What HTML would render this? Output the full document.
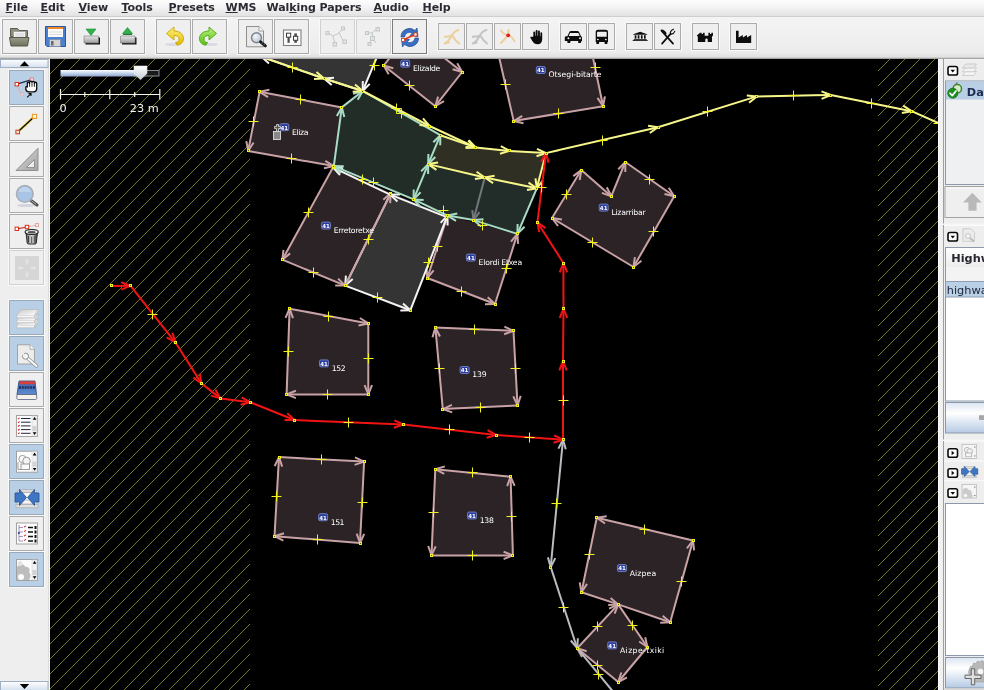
<!DOCTYPE html>
<html><head><meta charset="utf-8"><title>JOSM</title>
<style>
html,body{margin:0;padding:0}
body{-webkit-font-smoothing:antialiased;width:984px;height:690px;overflow:hidden;position:relative;background:#eeeeee;font-family:"DejaVu Sans","Liberation Sans",sans-serif;}
.abs{position:absolute}
svg,#menubar{will-change:transform}
#menubar{left:0;top:0;width:984px;height:16px;background:linear-gradient(#fdfdfd,#f2f2f2 50%,#e2e2e2);border-bottom:1px solid #cfcfcf}
#menubar span{position:absolute;top:-0.5px;letter-spacing:-0.08px;margin-left:0.6px;font-size:11px;font-weight:bold;color:#2e2a33;white-space:nowrap;line-height:15px}
#menubar u{text-decoration:underline;text-underline-offset:1px}
#toolbar{left:0;top:17px;width:984px;height:40px;background:linear-gradient(#f4f4f4,#ececec 88%,#e0e0e0);border-bottom:1px solid #cfcfcf;box-shadow:0 1px 0 #a4a4a4}
.tb{position:absolute;box-sizing:border-box;border:1px solid #b4b4b4;box-shadow:0 0 0 1px #fbfbfb;background:#efefef}
.tb.sel{background:#b8cfe5;border-color:#9fb4c9}
.tb svg{position:absolute;left:0;top:0}
#left{left:0;top:59px;width:48px;height:631px;background:#eeeeee;border-right:2px solid #f8f8f8}
#map{left:50px;top:59px;width:888px;height:631px;background:#000;overflow:hidden}
#right{left:938px;top:59px;width:46px;height:631px;background:#eeeeee}
</style></head><body>
<div id="menubar" class="abs">
<span style="left:5px"><u>F</u>ile</span>
<span style="left:40px"><u>E</u>dit</span>
<span style="left:78px"><u>V</u>iew</span>
<span style="left:121px"><u>T</u>ools</span>
<span style="left:168px"><u>P</u>resets</span>
<span style="left:225px"><u>W</u>MS</span>
<span style="left:266px">Wal<u>k</u>ing Papers</span>
<span style="left:373px"><u>A</u>udio</span>
<span style="left:422px"><u>H</u>elp</span>
</div>
<div id="toolbar" class="abs">
<svg width="984" height="42" viewBox="0 17 984 42" style="position:absolute;left:0;top:0" font-family="DejaVu Sans, Liberation Sans, sans-serif">
<defs><linearGradient id="gfold" x1="0" y1="0" x2="0" y2="1"><stop offset="0" stop-color="#9a9c88"/><stop offset="1" stop-color="#6e705e"/></linearGradient><linearGradient id="gbox" x1="0" y1="0" x2="0" y2="1"><stop offset="0" stop-color="#e8e8e8"/><stop offset="1" stop-color="#9c9c9c"/></linearGradient><linearGradient id="gund" x1="0" y1="0" x2="0" y2="1"><stop offset="0" stop-color="#fff27a"/><stop offset="1" stop-color="#e2b800"/></linearGradient><linearGradient id="gred" x1="0" y1="0" x2="0" y2="1"><stop offset="0" stop-color="#b6f27a"/><stop offset="1" stop-color="#5cc016"/></linearGradient><radialGradient id="glens" cx=".4" cy=".35" r=".7"><stop offset="0" stop-color="#f4f8fc"/><stop offset="1" stop-color="#b4c2d0"/></radialGradient></defs>
<rect x="1.5" y="18.5" width="36" height="36" fill="none" stroke="#fafafa" stroke-width="1"/><rect x="2.5" y="19.5" width="34" height="34" fill="#efefef" stroke="#ababab" stroke-width="1"/>
<rect x="37.5" y="18.5" width="36" height="36" fill="none" stroke="#fafafa" stroke-width="1"/><rect x="38.5" y="19.5" width="34" height="34" fill="#efefef" stroke="#ababab" stroke-width="1"/>
<rect x="73.5" y="18.5" width="36" height="36" fill="none" stroke="#fafafa" stroke-width="1"/><rect x="74.5" y="19.5" width="34" height="34" fill="#efefef" stroke="#ababab" stroke-width="1"/>
<rect x="109.5" y="18.5" width="36" height="36" fill="none" stroke="#fafafa" stroke-width="1"/><rect x="110.5" y="19.5" width="34" height="34" fill="#efefef" stroke="#ababab" stroke-width="1"/>
<rect x="155.5" y="18.5" width="36" height="36" fill="none" stroke="#fafafa" stroke-width="1"/><rect x="156.5" y="19.5" width="34" height="34" fill="#efefef" stroke="#ababab" stroke-width="1"/>
<rect x="191.5" y="18.5" width="36" height="36" fill="none" stroke="#fafafa" stroke-width="1"/><rect x="192.5" y="19.5" width="34" height="34" fill="#efefef" stroke="#ababab" stroke-width="1"/>
<rect x="237.5" y="18.5" width="36" height="36" fill="none" stroke="#fafafa" stroke-width="1"/><rect x="238.5" y="19.5" width="34" height="34" fill="#efefef" stroke="#ababab" stroke-width="1"/>
<rect x="273.5" y="18.5" width="36" height="36" fill="none" stroke="#fafafa" stroke-width="1"/><rect x="274.5" y="19.5" width="34" height="34" fill="#efefef" stroke="#ababab" stroke-width="1"/>
<rect x="319.5" y="18.5" width="36" height="36" fill="none" stroke="#fafafa" stroke-width="1"/><rect x="320.5" y="19.5" width="34" height="34" fill="#efefef" stroke="#d0d0d0" stroke-width="1"/>
<rect x="355.5" y="18.5" width="36" height="36" fill="none" stroke="#fafafa" stroke-width="1"/><rect x="356.5" y="19.5" width="34" height="34" fill="#efefef" stroke="#d0d0d0" stroke-width="1"/>
<rect x="391.5" y="18.5" width="36" height="36" fill="none" stroke="#fafafa" stroke-width="1"/><rect x="392.5" y="19.5" width="34" height="34" fill="#efefef" stroke="#ababab" stroke-width="1"/>
<rect x="392.5" y="19.5" width="34" height="34" fill="none" stroke="#7c7c7c"/>
<rect x="437.5" y="22.5" width="28" height="28" fill="none" stroke="#fafafa" stroke-width="1"/><rect x="438.5" y="23.5" width="26" height="26" fill="#efefef" stroke="#ababab" stroke-width="1"/>
<rect x="465.5" y="22.5" width="28" height="28" fill="none" stroke="#fafafa" stroke-width="1"/><rect x="466.5" y="23.5" width="26" height="26" fill="#efefef" stroke="#ababab" stroke-width="1"/>
<rect x="493.5" y="22.5" width="28" height="28" fill="none" stroke="#fafafa" stroke-width="1"/><rect x="494.5" y="23.5" width="26" height="26" fill="#efefef" stroke="#ababab" stroke-width="1"/>
<rect x="521.5" y="22.5" width="28" height="28" fill="none" stroke="#fafafa" stroke-width="1"/><rect x="522.5" y="23.5" width="26" height="26" fill="#efefef" stroke="#ababab" stroke-width="1"/>
<rect x="559.5" y="22.5" width="28" height="28" fill="none" stroke="#fafafa" stroke-width="1"/><rect x="560.5" y="23.5" width="26" height="26" fill="#efefef" stroke="#ababab" stroke-width="1"/>
<rect x="587.5" y="22.5" width="28" height="28" fill="none" stroke="#fafafa" stroke-width="1"/><rect x="588.5" y="23.5" width="26" height="26" fill="#efefef" stroke="#ababab" stroke-width="1"/>
<rect x="625.5" y="22.5" width="28" height="28" fill="none" stroke="#fafafa" stroke-width="1"/><rect x="626.5" y="23.5" width="26" height="26" fill="#efefef" stroke="#ababab" stroke-width="1"/>
<rect x="653.5" y="22.5" width="28" height="28" fill="none" stroke="#fafafa" stroke-width="1"/><rect x="654.5" y="23.5" width="26" height="26" fill="#efefef" stroke="#ababab" stroke-width="1"/>
<rect x="691.5" y="22.5" width="28" height="28" fill="none" stroke="#fafafa" stroke-width="1"/><rect x="692.5" y="23.5" width="26" height="26" fill="#efefef" stroke="#ababab" stroke-width="1"/>
<rect x="729.5" y="22.5" width="28" height="28" fill="none" stroke="#fafafa" stroke-width="1"/><rect x="730.5" y="23.5" width="26" height="26" fill="#efefef" stroke="#ababab" stroke-width="1"/>
<g><path d="M10.5 28.5h7l1.5 2h8.5v6h-17z" fill="#8d8f7b" stroke="#5b5d4e"/><path d="M13.5 31.5h12v8h-12z" fill="#f4f4f4" stroke="#9a9a9a" stroke-width=".8"/><path d="M15 34h9M15 36h9" stroke="#c8c8c8" stroke-width=".8"/><path d="M9.5 37.5h19.5l-1.5 8.500h-16.500z" fill="url(#gfold)" stroke="#55574a"/></g>
<g><path d="M45.500 26.500h20v20h-18.500l-1.500-1.500z" fill="#4b7fd0" stroke="#2b559c"/><rect x="48" y="27" width="15" height="2" fill="#f08a2a"/><rect x="48" y="29" width="15" height="8" fill="#fbfbfb"/><path d="M49 32h13M49 34.500h13" stroke="#cfcfcf" stroke-width=".7"/><rect x="49.500" y="39.500" width="11" height="7" fill="#d4d4d4" stroke="#7f8ea8" stroke-width=".8"/><rect x="51" y="41" width="2.500" height="4.500" fill="#6a6a6a"/></g>
<g><path d="M86 29h10l-5 6.500z" fill="#2fb24a" stroke="#1d8a35" stroke-width=".6"/><path d="M85.500 37.500h14.500v7h-14.500z" fill="#111"/><path d="M84 36h14.500v7h-14.500z" fill="url(#gbox)" stroke="#777" stroke-width=".6"/></g>
<g><path d="M122.500 33.500h10l-5-6z" fill="#2fb24a" stroke="#1d8a35" stroke-width=".6"/><rect x="123" y="33.800" width="9" height="1.200" fill="#1d7a30"/><path d="M122 37.500h14.500v7h-14.500z" fill="#111"/><path d="M120.500 36h14.500v7h-14.500z" fill="url(#gbox)" stroke="#777" stroke-width=".6"/></g>
<g><ellipse cx="173" cy="44.500" rx="8" ry="1.600" fill="#d0d0e4" opacity=".7"/><path d="M166.500 33.500l7.500-6.500v4c5.500 0 9.500 3 9.500 7.500 0 4-3 6.500-6.500 6.500l-1.500-2.500c2.500 0 3.500-1.500 3.500-3.500 0-2.500-2-3.500-5-3.500v4.500z" fill="url(#gund)" stroke="#c9a400" stroke-width=".9" stroke-linejoin="round"/></g>
<g><ellipse cx="210" cy="44.500" rx="8" ry="1.600" fill="#d0d0e4" opacity=".7"/><path d="M216.500 33.500l-7.500-6.500v4c-5.500 0-9.500 3-9.500 7.500 0 4 3 6.500 6.500 6.500l1.500-2.500c-2.500 0-3.500-1.500-3.500-3.500 0-2.500 2-3.500 5-3.500v4.500z" fill="url(#gred)" stroke="#4ea512" stroke-width=".9" stroke-linejoin="round"/></g>
<g><path d="M246.500 26.500h12.500l4.500 4.500v15.800h-17z" fill="#e9e9e9" stroke="#8e8e8e"/><path d="M259 26.500v4.500h4.500" fill="#fafafa" stroke="#8e8e8e" stroke-width=".8"/><circle cx="256.500" cy="37.700" r="5" fill="url(#glens)" stroke="#80848c" stroke-width="1.400"/><path d="M260.600 41.800l4.800 4" stroke="#1c1c1c" stroke-width="3" stroke-linecap="round"/><path d="M261.800 43.600l1.600-1.800M263.600 45.200l1.600-1.800" stroke="#9a9a9a" stroke-width=".6"/></g>
<g><rect x="283.500" y="30" width="17.500" height="15.500" fill="#fbfbfb" stroke="#808080" stroke-width="1.100"/><rect x="287.500" y="37" width="2.200" height="5.800" fill="#4c4c4c"/><rect x="294.300" y="33.400" width="2.600" height="9.400" fill="#4c4c4c"/><rect x="286.500" y="33.200" width="4.200" height="4" fill="#fbfbfb" stroke="#3c3c3c" stroke-width="1"/><rect x="293.500" y="36.300" width="4.200" height="4" fill="#fbfbfb" stroke="#3c3c3c" stroke-width="1"/></g>
<g fill="none" stroke="#c4c8c8" stroke-width="1"><path d="M328 33l5 3 6-3 4-5M333 36l2 8M339 33l5 9"/><rect x="326" y="31.500" width="3" height="3" fill="#dfe3e3"/><rect x="333" y="42.500" width="3.500" height="3.500" fill="#dfe3e3"/><rect x="343" y="40" width="3.500" height="3.500" fill="#dfe3e3"/><rect x="341.500" y="27" width="3" height="3" fill="#dfe3e3"/></g>
<g fill="none" stroke="#c4c8c8" stroke-width="1"><path d="M367 33h5l5-4M372 33l1 5 3 5M373 38l-4 6"/><rect x="365.500" y="31.500" width="3" height="3" fill="#dfe3e3"/><rect x="370.500" y="36.500" width="4" height="4" fill="#dfe3e3"/><rect x="376" y="27.500" width="3.500" height="3.500" fill="#dfe3e3"/><rect x="368" y="42.500" width="3" height="3" fill="#dfe3e3"/></g>
<g><path d="M401 37a8.500 8.500 0 0 1 14-6.500l2-2.500 1 8.500-8-1 2.300-2.300a5 5 0 0 0-7.800 3.800z" fill="#3a6fc2" stroke="#1f4a94" stroke-width=".7"/><path d="M418.500 38a8.500 8.500 0 0 1-14 6.500l-2 2.500-1-8.500 8 1-2.300 2.300a5 5 0 0 0 7.800-3.800z" fill="#3a6fc2" stroke="#1f4a94" stroke-width=".7"/><path d="M403 40l6.500-3 6-2.500" stroke="#e23a1c" stroke-width="1.600" fill="none"/><rect x="401.500" y="38.500" width="3" height="3" fill="#fff" stroke="#e23a1c" stroke-width=".8"/><rect x="414" y="33" width="3" height="3" fill="#fff" stroke="#e23a1c" stroke-width=".8"/></g>
<g transform="translate(438,23)" fill="none" stroke="#ecd09c" stroke-width="2" stroke-linecap="round"><path d="M20.400 7c-3.400 1-5.900 4-7.100 6.500c-1.800 3.500-3.800 5.500-5.900 6.700"/><path d="M14.300 12.500c1.700 3 4.200 6 6.700 8.100"/><path d="M6.800 13.800l6.200-.6"/><path d="M6.600 20.400l4.200-.8"/></g>
<g transform="translate(466,23)" fill="none" stroke="#c4c4c4" stroke-width="2" stroke-linecap="round"><path d="M20.400 7c-3.400 1-5.900 4-7.100 6.500c-1.800 3.500-3.800 5.500-5.900 6.700"/><path d="M14.300 12.500c1.700 3 4.200 6 6.700 8.100"/><path d="M6.800 13.800l6.200-.6"/><path d="M6.600 20.400l4.200-.8"/></g>
<g transform="translate(494,23)" fill="none" stroke="#ecd09c" stroke-width="2" stroke-linecap="round"><path d="M7 7.400c1.500 2.600 4 4 7.200 4.900s5.200 3.400 6.200 5.900"/><path d="M14.500 7c.4 2.400 0 4-1 5.800s-4 4.700-6.600 7.200"/><circle cx="14.200" cy="12.300" r="1.900" fill="#e8191c" stroke="none"/></g>
<g transform="translate(525.74,27.01) scale(0.844,0.768)" fill="#0d0d0d"><path d="M9 12.500v-5.500a1.100 1.100 0 0 1 2.200 0v4.500h.6v-6.500a1.100 1.100 0 0 1 2.200 0v6.500h.6v-5.800a1.100 1.100 0 0 1 2.200 0v6.200h.6v-3.900a1.050 1.050 0 0 1 2.100 0v8c0 4-2 6.500-5.500 6.500-3 0-4.500-1.500-6-4l-2.500-4.500c-.6-1.200.9-2 1.700-1z"/></g>
<g transform="translate(563.34,24.79) scale(0.804,0.796)" fill="#0d0d0d"><path d="M5 14.500l2.500-5.500c.4-.8 1-1.200 2-1.200h8c1 0 1.600.4 2 1.200l2.500 5.500c.8.300 1.200.9 1.200 1.800v4.200h-21.400v-4.200c0-.9.400-1.500 1.200-1.800z"/><path d="M8.300 10.200h10.400l1.600 3.800h-13.600z" fill="#efefef"/><rect x="5" y="20" width="3.600" height="3" rx=".6"/><rect x="18.400" y="20" width="3.600" height="3" rx=".6"/><circle cx="6.300" cy="17" r="1.200" fill="#efefef"/><circle cx="20.700" cy="17" r="1.200" fill="#efefef"/></g>
<g transform="translate(589.08,24.88) scale(0.946,0.821)" fill="#0d0d0d"><path d="M7 8.500c0-1.500 1-2.500 2.500-2.500h8c1.500 0 2.500 1 2.500 2.500v12.500h-13z"/><rect x="8.400" y="8.500" width="10.200" height="6" rx=".8" fill="#efefef"/><rect x="7.600" y="20.500" width="3" height="2.800" rx=".5"/><rect x="16.400" y="20.500" width="3" height="2.800" rx=".5"/><circle cx="9.300" cy="17.800" r="1" fill="#efefef"/><circle cx="17.700" cy="17.800" r="1" fill="#efefef"/></g>
<g transform="translate(626.70,27.72) scale(1.000,0.612)" fill="#0d0d0d"><path d="M6.500 10.500l7-4 7 4v1h-14z"/><rect x="7" y="18.500" width="13" height="1.300"/><rect x="6" y="20.300" width="15" height="1.400"/><rect x="8" y="12.300" width="1.700" height="5.600"/><rect x="11" y="12.300" width="1.700" height="5.600"/><rect x="14.200" y="12.300" width="1.700" height="5.600"/><rect x="17.300" y="12.300" width="1.700" height="5.600"/></g>
<g transform="translate(656.13,25.06) scale(0.847,0.842)" stroke="#0d0d0d" stroke-width="2" stroke-linecap="round" fill="none"><path d="M7 7.500l13 14.500"/><path d="M7 22l10-11.500"/><path d="M17 10.500c-.5-2 1-4.500 3.500-5.500M17 10.500c2 .5 4-.5 5-3" stroke-width="1.400"/><path d="M6.500 6.500c1.500 0 3.500 1.500 4.500 3.500" stroke-width="2.600"/></g>
<g transform="translate(695.64,26.42) scale(0.805,0.785)" fill="#0d0d0d"><path d="M5.500 8h2v1.500h1.700v-1.500h2v4h4.600v-4h2v1.500h1.700v-1.500h2v3.500l-1.200 1.500v7h-17.600v-7l-1.200-1.500z"/><path d="M12 20v-3a1.500 1.500 0 0 1 3 0v3z" fill="#efefef"/></g>
<g transform="translate(730.23,24.81) scale(1.048,0.841)" fill="#0d0d0d"><path d="M5.500 21.500v-14.500h2.500v8l4-3v3l4-3v3l4-3v9.500z"/></g>
</svg>
</div>
<div id="left" class="abs">
<svg width="50" height="631" viewBox="0 59 50 631" style="position:absolute;left:0;top:0" font-family="DejaVu Sans, Liberation Sans, sans-serif">
<defs><linearGradient id="gsb" x1="0" y1="0" x2="0" y2="1"><stop offset="0" stop-color="#ffffff"/><stop offset="1" stop-color="#d3e0ee"/></linearGradient><linearGradient id="glay" x1="0" y1="0" x2="1" y2="1"><stop offset="0" stop-color="#c9c9c9"/><stop offset="1" stop-color="#ffffff"/></linearGradient><linearGradient id="gtri" x1="0" y1="0" x2="1" y2="1"><stop offset="0" stop-color="#d8d8d8"/><stop offset="1" stop-color="#a4a4a4"/></linearGradient><linearGradient id="gbook" x1="0" y1="0" x2="0" y2="1"><stop offset="0" stop-color="#3a62ae"/><stop offset="1" stop-color="#5f8ad0"/></linearGradient><linearGradient id="gcan" x1="0" y1="0" x2="1" y2="0"><stop offset="0" stop-color="#5a5a5a"/><stop offset=".5" stop-color="#e0e0e0"/><stop offset="1" stop-color="#3a3a3a"/></linearGradient></defs>
<rect x="48" y="58" width="2" height="632" fill="#f7f7f7"/><rect x="48" y="58" width="1" height="632" fill="#dcdcdc"/>
<rect x="0.5" y="59.500" width="47.500" height="8" fill="url(#gsb)" stroke="#9fb0c4" stroke-width="1"/><path d="M19.800 66.200h9.400l-4.700-5z" fill="#000"/>
<rect x="0.5" y="681.500" width="47.500" height="9" fill="url(#gsb)" stroke="#9fb0c4" stroke-width="1"/><path d="M19.800 684h9.400l-4.700 5z" fill="#000"/>
<rect x="8.5" y="69.5" width="36" height="36" fill="none" stroke="#fafafa" stroke-width="1"/><rect x="9.5" y="70.5" width="34" height="34" fill="#b8cfe5" stroke="#9aa9b8" stroke-width="1"/>
<rect x="8.5" y="105.5" width="36" height="36" fill="none" stroke="#fafafa" stroke-width="1"/><rect x="9.5" y="106.5" width="34" height="34" fill="#efefef" stroke="#ababab" stroke-width="1"/>
<rect x="8.5" y="141.5" width="36" height="36" fill="none" stroke="#fafafa" stroke-width="1"/><rect x="9.5" y="142.5" width="34" height="34" fill="#efefef" stroke="#ababab" stroke-width="1"/>
<rect x="8.5" y="177.5" width="36" height="36" fill="none" stroke="#fafafa" stroke-width="1"/><rect x="9.5" y="178.5" width="34" height="34" fill="#efefef" stroke="#ababab" stroke-width="1"/>
<rect x="8.5" y="213.5" width="36" height="36" fill="none" stroke="#fafafa" stroke-width="1"/><rect x="9.5" y="214.5" width="34" height="34" fill="#efefef" stroke="#ababab" stroke-width="1"/>
<rect x="8.5" y="249.5" width="36" height="36" fill="none" stroke="#fafafa" stroke-width="1"/><rect x="9.5" y="250.5" width="34" height="34" fill="#efefef" stroke="#d0d0d0" stroke-width="1"/>
<rect x="8.5" y="299.5" width="36" height="36" fill="none" stroke="#fafafa" stroke-width="1"/><rect x="9.5" y="300.5" width="34" height="34" fill="#b8cfe5" stroke="#9aa9b8" stroke-width="1"/>
<rect x="8.5" y="335.5" width="36" height="36" fill="none" stroke="#fafafa" stroke-width="1"/><rect x="9.5" y="336.5" width="34" height="34" fill="#b8cfe5" stroke="#9aa9b8" stroke-width="1"/>
<rect x="8.5" y="371.5" width="36" height="36" fill="none" stroke="#fafafa" stroke-width="1"/><rect x="9.5" y="372.5" width="34" height="34" fill="#efefef" stroke="#ababab" stroke-width="1"/>
<rect x="8.5" y="407.5" width="36" height="36" fill="none" stroke="#fafafa" stroke-width="1"/><rect x="9.5" y="408.5" width="34" height="34" fill="#efefef" stroke="#ababab" stroke-width="1"/>
<rect x="8.5" y="443.5" width="36" height="36" fill="none" stroke="#fafafa" stroke-width="1"/><rect x="9.5" y="444.5" width="34" height="34" fill="#b8cfe5" stroke="#9aa9b8" stroke-width="1"/>
<rect x="8.5" y="479.5" width="36" height="36" fill="none" stroke="#fafafa" stroke-width="1"/><rect x="9.5" y="480.5" width="34" height="34" fill="#b8cfe5" stroke="#9aa9b8" stroke-width="1"/>
<rect x="8.5" y="515.5" width="36" height="36" fill="none" stroke="#fafafa" stroke-width="1"/><rect x="9.5" y="516.5" width="34" height="34" fill="#efefef" stroke="#ababab" stroke-width="1"/>
<rect x="8.5" y="551.5" width="36" height="36" fill="none" stroke="#fafafa" stroke-width="1"/><rect x="9.5" y="552.5" width="34" height="34" fill="#b8cfe5" stroke="#9aa9b8" stroke-width="1"/>
<g><path d="M16.800 84.200c1 4 3 7 5.200 10" stroke="#e4a6a6" stroke-width="1" fill="none"/><path d="M16.800 84.200l15-4.500" stroke="#1c2c44" stroke-width="1.300"/><rect x="30.2" y="77.89999999999999" width="3.4" height="3.4" fill="#f4d8d8" stroke="#e08c8c" stroke-width="1"/><rect x="15.100000000000001" y="82.5" width="3.4" height="3.4" fill="#fff" stroke="#d8321c" stroke-width="1"/><rect x="21.0" y="93.2" width="2.6" height="2.6" fill="#dfe6f0" stroke="#e8b4b4" stroke-width="1"/><path d="M27.300 87v-3.600a1.150 1.150 0 0 1 2.300 0v-1a1.200 1.200 0 0 1 2.400 0v.2a1.200 1.200 0 0 1 2.400 0v.8a1.150 1.150 0 0 1 2.300 0v5.400c0 2-1.100 3-3 3h-4.800c-2 0-3.100-1-3.100-3v-1.400c0-.9.700-1.300 1.500-1z" fill="#fff" stroke="#0a0a0a" stroke-width="1.300" stroke-linejoin="round"/><path d="M29.600 83.800v3M32 83.300v3.300M34.400 83.800v3" stroke="#0a0a0a" stroke-width=".9"/><path d="M27.200 97.300l3.600-3.600M28.400 93.500h2.600v2.600" stroke="#0a0a0a" stroke-width="1.100" fill="none"/></g>
<g><path d="M17.700 132l16.800-15.600" stroke="#f4e27a" stroke-width="3.200"/><path d="M17.700 132l16.800-15.600" stroke="#0a0a0a" stroke-width="1.400"/><rect x="15.899999999999999" y="130.2" width="3.6" height="3.6" fill="#f6e2dc" stroke="#c83c24" stroke-width="1"/><rect x="32.4" y="114.30000000000001" width="4.2" height="4.2" fill="#fdf3c4" stroke="#e8962a" stroke-width="1"/></g>
<path d="M16 170.500h22v-22.200zM26.500 167.500h8v-8z" fill="url(#gtri)" fill-rule="evenodd" stroke="#8a8a8a" stroke-width=".9" stroke-linejoin="round"/>
<g><ellipse cx="26" cy="205.500" rx="9" ry="1.600" fill="#d4d4de"/><path d="M31 200.500l6 4.500" stroke="#4a4a4a" stroke-width="3" stroke-linecap="round"/><path d="M31.500 200.800l4.500 3.400" stroke="#b0b0b0" stroke-width="1" stroke-linecap="round"/><circle cx="24.800" cy="193.900" r="8.300" fill="#a9c5e6" stroke="#a8adb6" stroke-width="1.600"/><path d="M18.500 192a6.500 6.500 0 0 1 12.600 0z" fill="#c3d7ef" opacity=".8"/></g>
<g><path d="M16.800 228.800l10.200-1.800" stroke="#c8321c" stroke-width="1.200"/><path d="M27 227l10-2" stroke="#e8b0a8" stroke-width="1"/><rect x="35.5" y="223.5" width="3" height="3" fill="#f2ecec" stroke="#e8a8a0" stroke-width="1"/><rect x="15.100000000000001" y="227.10000000000002" width="3.4" height="3.4" fill="#fff" stroke="#d8321c" stroke-width="1"/><rect x="25.3" y="225.3" width="3.4" height="3.4" fill="#fff" stroke="#d8321c" stroke-width="1"/><path d="M26 232.500h11.500l-1.200 10.500c-.1.600-.6 1-1.200 1h-6.700c-.6 0-1.100-.4-1.200-1z" fill="url(#gcan)" stroke="#1a1a1a" stroke-width=".9"/><ellipse cx="31.700" cy="232" rx="6.600" ry="2.500" fill="#f0f0f0" stroke="#1a1a1a" stroke-width="1.100"/><ellipse cx="31.700" cy="232.200" rx="4" ry="1.200" fill="#555"/><path d="M28.500 236v6.500M31.700 236.500v6.500M34.900 236v6.500" stroke="#2a2a2a" stroke-width=".8"/></g>
<g><rect x="15" y="256" width="24" height="24" fill="#d6d6d6"/><path d="M27 258.500l2 3h-1.300v3h-1.400v-3h-1.300zM27 277.500l2-3h-1.300v-3h-1.400v3h-1.300zM17.500 268l3-2v1.300h3v1.400h-3v1.300zM36.500 268l-3-2v1.300h-3v1.400h3v1.300z" fill="#e6e6e6"/></g>
<g><path d="M20.500 319.5h17.500l-3.500 6h-17.700z" fill="url(#glay)" stroke="#b8b8b8" stroke-width=".7"/><path d="M16.800 325.5v2.300h17.700v-2.300M34.500 327.8l3.500-6v-2.300" fill="#f6f6f6" stroke="#b8b8b8" stroke-width=".7"/><path d="M20.500 314.5h17.500l-3.500 6h-17.700z" fill="url(#glay)" stroke="#b8b8b8" stroke-width=".7"/><path d="M16.800 320.5v2.300h17.700v-2.300M34.500 322.8l3.500-6v-2.300" fill="#f6f6f6" stroke="#b8b8b8" stroke-width=".7"/><path d="M20.500 309.5h17.500l-3.500 6h-17.700z" fill="url(#glay)" stroke="#b8b8b8" stroke-width=".7"/><path d="M16.800 315.5v2.300h17.700v-2.300M34.500 317.8l3.500-6v-2.300" fill="#f6f6f6" stroke="#b8b8b8" stroke-width=".7"/></g>
<g><path d="M17.500 344.800h12.500l4.500 4.500v14.700h-17z" fill="#ececec" stroke="#9c9c9c" stroke-width=".9"/><path d="M30 344.800v4.500h4.500" fill="#fbfbfb" stroke="#9c9c9c" stroke-width=".8"/><path d="M36.500 366l-8.500-7.500" stroke="#8a8a8a" stroke-width="3.400" stroke-linecap="round"/><path d="M36.500 366l-8.500-7.500" stroke="#fcfcfc" stroke-width="2" stroke-linecap="round"/><circle cx="25.500" cy="356.200" r="3" fill="#fcfcfc" stroke="#8a8a8a" stroke-width="1"/><path d="M22 353l3.500 3.200" stroke="#ececec" stroke-width="2.200"/></g>
<g><path d="M19 381h16l1.500 13.500h-19.500z" fill="url(#gbook)" stroke="#27437c" stroke-width=".8"/><path d="M19.300 381.300h15.400l.3 3h-16z" fill="#d8403c"/><path d="M19 387.500h16.500" stroke="#1c2f5c" stroke-width="2.400" stroke-dasharray="2 .8"/><path d="M17 394.500h19.500l.3 3.500c0 1-.5 1.500-1.500 1.500h-17c-1 0-1.500-.5-1.500-1.500z" fill="#f3f1ea" stroke="#50607c" stroke-width=".8"/></g>
<g><rect x="16.500" y="415.5" width="21" height="21" fill="#fdfdfd" stroke="#9a9a9a" stroke-width=".9"/><rect x="32" y="416.0" width="5" height="20" fill="#f2f2f2" stroke="#cfcfcf" stroke-width=".5"/><rect x="32.300" y="426.0" width="4.400" height="5" fill="#d2d2d2"/><path d="M32.800 419.7h3.600l-1.800-2.800zM32.800 432.3h3.600l-1.800 2.800z" fill="#000"/><path d="M21 418.5h9.500" stroke="#23233f" stroke-width="1"/><path d="M18 419.1l1.600-1.200" stroke="#d8241c" stroke-width="1.100"/><path d="M21 422.2h9.500" stroke="#23233f" stroke-width="1"/><path d="M18 422.8l1.600-1.200" stroke="#d8241c" stroke-width="1.100"/><path d="M21 425.9h9.500" stroke="#23233f" stroke-width="1"/><path d="M18 426.5l1.600-1.200" stroke="#d8241c" stroke-width="1.100"/><path d="M21 429.6h9.500" stroke="#23233f" stroke-width="1"/><path d="M18 430.20000000000005l1.600-1.200" stroke="#d8241c" stroke-width="1.100"/><path d="M21 433.3h9.500" stroke="#23233f" stroke-width="1"/><path d="M18 433.90000000000003l1.600-1.200" stroke="#d8241c" stroke-width="1.100"/></g>
<g><rect x="16.500" y="451.2" width="21" height="21" fill="#fdfdfd" stroke="#9a9a9a" stroke-width=".9"/><rect x="32" y="451.7" width="5" height="20" fill="#f2f2f2" stroke="#cfcfcf" stroke-width=".5"/><rect x="32.300" y="461.7" width="4.400" height="5" fill="#d2d2d2"/><path d="M32.800 455.4h3.600l-1.800-2.800zM32.800 468.0h3.600l-1.800 2.800z" fill="#000"/><circle cx="22.500" cy="459" r="3.600" fill="none" stroke="#9a9a9a" stroke-width="1"/><circle cx="26.500" cy="461" r="3.800" fill="#f4f4f4" stroke="#9a9a9a" stroke-width="1"/><rect x="21" y="464" width="8.500" height="5.500" fill="#fafafa" stroke="#9a9a9a" stroke-width="1"/><path d="M18 462v7.500h3" stroke="#9a9a9a" fill="none"/></g>
<g><path d="M19 489.500h16l2.500 3h-21z" fill="#dcdcdc" stroke="#a8a8a8" stroke-width=".7"/><path d="M17 500h20v4h-20z" fill="#f4f4f4" stroke="#a8a8a8" stroke-width=".7"/><path d="M16 504.500h22v3.200h-22z" fill="#e0e0e0" stroke="#a8a8a8" stroke-width=".7"/><rect x="19" y="493" width="16" height="6.500" fill="#f8f8f8"/><path d="M15 493h4.500v-3.500l7 8-7 8v-3.500h-4.500z" fill="#3f76c4" stroke="#24518f" stroke-width=".8" stroke-linejoin="round"/><path d="M39 493h-4.500v-3.500l-7 8 7 8v-3.500h4.500z" fill="#3f76c4" stroke="#24518f" stroke-width=".8" stroke-linejoin="round"/></g>
<g><rect x="16.500" y="523" width="21" height="21" fill="#fdfdfd" stroke="#9a9a9a" stroke-width=".9"/><path d="M19 525v16M19 527.500h4M19 532h4M19 536.500h4M19 541h4" stroke="#8a7ab0" stroke-width=".8" fill="none"/><path d="M24 527.1l2-1.200" stroke="#d8241c" stroke-width="1.100"/><path d="M28 527.5h5" stroke="#111" stroke-width="1.500"/><rect x="34.500" y="526.0" width="2" height="3" fill="#111"/><path d="M24 531.6l2-1.200" stroke="#d8241c" stroke-width="1.100"/><path d="M28 532.0h5" stroke="#111" stroke-width="1.500"/><rect x="34.500" y="530.5" width="2" height="3" fill="#111"/><path d="M24 536.1l2-1.200" stroke="#d8241c" stroke-width="1.100"/><path d="M28 536.5h5" stroke="#111" stroke-width="1.500"/><rect x="34.500" y="535.0" width="2" height="3" fill="#111"/><path d="M24 540.6l2-1.200" stroke="#d8241c" stroke-width="1.100"/><path d="M28 541.0h5" stroke="#111" stroke-width="1.500"/><rect x="34.500" y="539.5" width="2" height="3" fill="#111"/><circle cx="18.800" cy="533" r="1" fill="#2a3a8a"/></g>
<g><rect x="16.500" y="559.5" width="21" height="21" fill="#fdfdfd" stroke="#9a9a9a" stroke-width=".9"/><rect x="32" y="560.0" width="5" height="20" fill="#f2f2f2" stroke="#cfcfcf" stroke-width=".5"/><rect x="32.300" y="570.0" width="4.400" height="5" fill="#d2d2d2"/><path d="M32.800 563.7h3.600l-1.800-2.800zM32.800 576.3h3.600l-1.800 2.800z" fill="#000"/><path d="M17 567c3-4 8-3 8 0 3-1 6 2 4 5 2 2 2 5 0 8h-12z" fill="#bdbdbd"/><circle cx="21" cy="577" r="3" fill="#fdfdfd"/><circle cx="20" cy="563.500" r="2.500" fill="#e4e4e4"/></g>
</svg>
</div>
<div id="map" class="abs">
<svg width="888" height="631" viewBox="50 59 888 631" style="position:absolute;left:0;top:0" font-family="DejaVu Sans, Liberation Sans, sans-serif">
<defs><clipPath id="cl1"><rect x="50" y="58" width="200" height="632"/></clipPath><clipPath id="cl2"><rect x="878" y="58" width="60" height="632"/></clipPath></defs>
<path clip-path="url(#cl1)" d="M49 30.0L251 -172.0M49 45.0L251 -157.0M49 60.0L251 -142.0M49 75.0L251 -127.0M49 90.0L251 -112.0M49 105.0L251 -97.0M49 120.0L251 -82.0M49 135.0L251 -67.0M49 150.0L251 -52.0M49 165.0L251 -37.0M49 180.0L251 -22.0M49 195.0L251 -7.0M49 210.0L251 8.0M49 225.0L251 23.0M49 240.0L251 38.0M49 255.0L251 53.0M49 270.0L251 68.0M49 285.0L251 83.0M49 300.0L251 98.0M49 315.0L251 113.0M49 330.0L251 128.0M49 345.0L251 143.0M49 360.0L251 158.0M49 375.0L251 173.0M49 390.0L251 188.0M49 405.0L251 203.0M49 420.0L251 218.0M49 435.0L251 233.0M49 450.0L251 248.0M49 465.0L251 263.0M49 480.0L251 278.0M49 495.0L251 293.0M49 510.0L251 308.0M49 525.0L251 323.0M49 540.0L251 338.0M49 555.0L251 353.0M49 570.0L251 368.0M49 585.0L251 383.0M49 600.0L251 398.0M49 615.0L251 413.0M49 630.0L251 428.0M49 645.0L251 443.0M49 660.0L251 458.0M49 675.0L251 473.0M49 690.0L251 488.0M49 705.0L251 503.0M49 720.0L251 518.0M49 735.0L251 533.0M49 750.0L251 548.0M49 765.0L251 563.0M49 780.0L251 578.0M49 795.0L251 593.0M49 810.0L251 608.0M49 825.0L251 623.0M49 840.0L251 638.0M49 855.0L251 653.0M49 870.0L251 668.0M49 885.0L251 683.0M49 900.0L251 698.0" stroke="#72762a" stroke-width="1" fill="none"/>
<path clip-path="url(#cl2)" d="M877 42.0L939 -20.0M877 57.0L939 -5.0M877 72.0L939 10.0M877 87.0L939 25.0M877 102.0L939 40.0M877 117.0L939 55.0M877 132.0L939 70.0M877 147.0L939 85.0M877 162.0L939 100.0M877 177.0L939 115.0M877 192.0L939 130.0M877 207.0L939 145.0M877 222.0L939 160.0M877 237.0L939 175.0M877 252.0L939 190.0M877 267.0L939 205.0M877 282.0L939 220.0M877 297.0L939 235.0M877 312.0L939 250.0M877 327.0L939 265.0M877 342.0L939 280.0M877 357.0L939 295.0M877 372.0L939 310.0M877 387.0L939 325.0M877 402.0L939 340.0M877 417.0L939 355.0M877 432.0L939 370.0M877 447.0L939 385.0M877 462.0L939 400.0M877 477.0L939 415.0M877 492.0L939 430.0M877 507.0L939 445.0M877 522.0L939 460.0M877 537.0L939 475.0M877 552.0L939 490.0M877 567.0L939 505.0M877 582.0L939 520.0M877 597.0L939 535.0M877 612.0L939 550.0M877 627.0L939 565.0M877 642.0L939 580.0M877 657.0L939 595.0M877 672.0L939 610.0M877 687.0L939 625.0M877 702.0L939 640.0M877 717.0L939 655.0M877 732.0L939 670.0M877 747.0L939 685.0M877 762.0L939 700.0" stroke="#72762a" stroke-width="1" fill="none"/>
<polygon points="341.8,107.4 259.6,91.8 248.2,150.9 333.8,166.1" fill="#2b2325"/>
<polygon points="333.8,166.1 282.3,259.7 345.2,285.6 390.8,193.1" fill="#2b2325"/>
<polygon points="447.5,215.6 427.3,278.0 495.0,304.0 517.4,233.9" fill="#2b2325"/>
<polygon points="410.6,31.3 462.2,72.0 435.3,106.2 383.7,65.5" fill="#2b2325"/>
<polygon points="586.9,28.6 603.1,106.2 513.7,121.1 496.9,47.5" fill="#2b2325"/>
<polygon points="581.3,170.1 611.3,196.2 625.3,162.0 674.2,196.2 633.5,267.0 552.0,218.0" fill="#2b2325"/>
<polygon points="289.6,308.7 368.3,323.4 368.3,394.4 286.6,394.4" fill="#2b2325"/>
<polygon points="435.4,327.6 513.5,330.8 517.5,405.4 442.8,409.1" fill="#2b2325"/>
<polygon points="279.0,457.1 364.1,461.6 360.0,543.0 274.5,536.2" fill="#2b2325"/>
<polygon points="510.6,476.7 435.3,469.2 431.5,555.4 512.9,555.4" fill="#2b2325"/>
<polygon points="693.0,540.5 596.8,517.7 581.5,592.2 618.2,604.4 670.2,622.3" fill="#2b2325"/>
<polygon points="577.2,648.2 618.2,604.4 647.4,647.0 618.2,682.0" fill="#2b2325"/>
<polygon points="390.8,193.1 345.2,285.6 410.3,310.3 447.5,215.6" fill="#343434"/>
<polygon points="261.5,56.8 324.0,78.5 362.7,91.0 379.0,56.0" fill="#343434"/>
<polygon points="362.7,91.0 341.8,107.4 333.8,166.1 413.6,199.4 428.2,164.1 440.4,135.2" fill="#222d28"/>
<polygon points="428.2,164.1 484.8,177.5 536.8,188.3 517.4,233.9 473.5,220.1 447.5,215.6 413.6,199.4" fill="#222d2a"/>
<polygon points="440.4,135.2 475.6,147.4 546.0,153.1 536.8,188.3 484.8,177.5 428.2,164.1" fill="#2f2f24"/>
<line x1="289.6" y1="308.7" x2="368.3" y2="323.4" stroke="#c9a2a6" stroke-width="2"/>
<line x1="368.3" y1="323.4" x2="359.9" y2="318.0" stroke="#c9a2a6" stroke-width="2"/>
<line x1="368.3" y1="323.4" x2="358.5" y2="325.4" stroke="#c9a2a6" stroke-width="2"/>
<line x1="368.3" y1="323.4" x2="368.3" y2="394.4" stroke="#c9a2a6" stroke-width="2"/>
<line x1="368.3" y1="394.4" x2="372.0" y2="385.1" stroke="#c9a2a6" stroke-width="2"/>
<line x1="368.3" y1="394.4" x2="364.6" y2="385.1" stroke="#c9a2a6" stroke-width="2"/>
<line x1="368.3" y1="394.4" x2="286.6" y2="394.4" stroke="#c9a2a6" stroke-width="2"/>
<line x1="286.6" y1="394.4" x2="295.9" y2="398.1" stroke="#c9a2a6" stroke-width="2"/>
<line x1="286.6" y1="394.4" x2="295.9" y2="390.7" stroke="#c9a2a6" stroke-width="2"/>
<line x1="286.6" y1="394.4" x2="289.6" y2="308.7" stroke="#c9a2a6" stroke-width="2"/>
<line x1="289.6" y1="308.7" x2="285.5" y2="317.8" stroke="#c9a2a6" stroke-width="2"/>
<line x1="289.6" y1="308.7" x2="293.0" y2="318.1" stroke="#c9a2a6" stroke-width="2"/>
<line x1="435.4" y1="327.6" x2="513.5" y2="330.8" stroke="#c9a2a6" stroke-width="2"/>
<line x1="513.5" y1="330.8" x2="504.4" y2="326.7" stroke="#c9a2a6" stroke-width="2"/>
<line x1="513.5" y1="330.8" x2="504.1" y2="334.2" stroke="#c9a2a6" stroke-width="2"/>
<line x1="513.5" y1="330.8" x2="517.5" y2="405.4" stroke="#c9a2a6" stroke-width="2"/>
<line x1="517.5" y1="405.4" x2="520.7" y2="395.9" stroke="#c9a2a6" stroke-width="2"/>
<line x1="517.5" y1="405.4" x2="513.3" y2="396.3" stroke="#c9a2a6" stroke-width="2"/>
<line x1="517.5" y1="405.4" x2="442.8" y2="409.1" stroke="#c9a2a6" stroke-width="2"/>
<line x1="442.8" y1="409.1" x2="452.2" y2="412.4" stroke="#c9a2a6" stroke-width="2"/>
<line x1="442.8" y1="409.1" x2="451.9" y2="404.9" stroke="#c9a2a6" stroke-width="2"/>
<line x1="442.8" y1="409.1" x2="435.4" y2="327.6" stroke="#c9a2a6" stroke-width="2"/>
<line x1="435.4" y1="327.6" x2="432.5" y2="337.2" stroke="#c9a2a6" stroke-width="2"/>
<line x1="435.4" y1="327.6" x2="440.0" y2="336.5" stroke="#c9a2a6" stroke-width="2"/>
<line x1="279.0" y1="457.1" x2="364.1" y2="461.6" stroke="#c9a2a6" stroke-width="2"/>
<line x1="364.1" y1="461.6" x2="355.0" y2="457.4" stroke="#c9a2a6" stroke-width="2"/>
<line x1="364.1" y1="461.6" x2="354.6" y2="464.9" stroke="#c9a2a6" stroke-width="2"/>
<line x1="364.1" y1="461.6" x2="360.0" y2="543.0" stroke="#c9a2a6" stroke-width="2"/>
<line x1="360.0" y1="543.0" x2="364.2" y2="533.9" stroke="#c9a2a6" stroke-width="2"/>
<line x1="360.0" y1="543.0" x2="356.7" y2="533.6" stroke="#c9a2a6" stroke-width="2"/>
<line x1="360.0" y1="543.0" x2="274.5" y2="536.2" stroke="#c9a2a6" stroke-width="2"/>
<line x1="274.5" y1="536.2" x2="283.4" y2="540.7" stroke="#c9a2a6" stroke-width="2"/>
<line x1="274.5" y1="536.2" x2="284.0" y2="533.2" stroke="#c9a2a6" stroke-width="2"/>
<line x1="274.5" y1="536.2" x2="279.0" y2="457.1" stroke="#c9a2a6" stroke-width="2"/>
<line x1="279.0" y1="457.1" x2="274.7" y2="466.1" stroke="#c9a2a6" stroke-width="2"/>
<line x1="279.0" y1="457.1" x2="282.2" y2="466.6" stroke="#c9a2a6" stroke-width="2"/>
<line x1="510.6" y1="476.7" x2="435.3" y2="469.2" stroke="#c9a2a6" stroke-width="2"/>
<line x1="435.3" y1="469.2" x2="444.2" y2="473.8" stroke="#c9a2a6" stroke-width="2"/>
<line x1="435.3" y1="469.2" x2="444.9" y2="466.4" stroke="#c9a2a6" stroke-width="2"/>
<line x1="435.3" y1="469.2" x2="431.5" y2="555.4" stroke="#c9a2a6" stroke-width="2"/>
<line x1="431.5" y1="555.4" x2="435.7" y2="546.3" stroke="#c9a2a6" stroke-width="2"/>
<line x1="431.5" y1="555.4" x2="428.2" y2="546.0" stroke="#c9a2a6" stroke-width="2"/>
<line x1="431.5" y1="555.4" x2="512.9" y2="555.4" stroke="#c9a2a6" stroke-width="2"/>
<line x1="512.9" y1="555.4" x2="503.6" y2="551.7" stroke="#c9a2a6" stroke-width="2"/>
<line x1="512.9" y1="555.4" x2="503.6" y2="559.1" stroke="#c9a2a6" stroke-width="2"/>
<line x1="512.9" y1="555.4" x2="510.6" y2="476.7" stroke="#c9a2a6" stroke-width="2"/>
<line x1="510.6" y1="476.7" x2="507.1" y2="486.1" stroke="#c9a2a6" stroke-width="2"/>
<line x1="510.6" y1="476.7" x2="514.6" y2="485.9" stroke="#c9a2a6" stroke-width="2"/>
<line x1="577.2" y1="648.2" x2="618.2" y2="604.4" stroke="#c9a2a6" stroke-width="2"/>
<line x1="618.2" y1="604.4" x2="609.1" y2="608.6" stroke="#c9a2a6" stroke-width="2"/>
<line x1="618.2" y1="604.4" x2="614.6" y2="613.7" stroke="#c9a2a6" stroke-width="2"/>
<line x1="618.2" y1="604.4" x2="647.4" y2="647.0" stroke="#c9a2a6" stroke-width="2"/>
<line x1="647.4" y1="647.0" x2="645.2" y2="637.2" stroke="#c9a2a6" stroke-width="2"/>
<line x1="647.4" y1="647.0" x2="639.1" y2="641.5" stroke="#c9a2a6" stroke-width="2"/>
<line x1="647.4" y1="647.0" x2="618.2" y2="682.0" stroke="#c9a2a6" stroke-width="2"/>
<line x1="618.2" y1="682.0" x2="627.0" y2="677.3" stroke="#c9a2a6" stroke-width="2"/>
<line x1="618.2" y1="682.0" x2="621.3" y2="672.5" stroke="#c9a2a6" stroke-width="2"/>
<line x1="618.2" y1="682.0" x2="577.2" y2="648.2" stroke="#c9a2a6" stroke-width="2"/>
<line x1="577.2" y1="648.2" x2="582.0" y2="657.0" stroke="#c9a2a6" stroke-width="2"/>
<line x1="577.2" y1="648.2" x2="586.7" y2="651.2" stroke="#c9a2a6" stroke-width="2"/>
<line x1="581.3" y1="170.1" x2="611.3" y2="196.2" stroke="#c9a2a6" stroke-width="2"/>
<line x1="611.3" y1="196.2" x2="606.8" y2="187.3" stroke="#c9a2a6" stroke-width="2"/>
<line x1="611.3" y1="196.2" x2="601.8" y2="192.9" stroke="#c9a2a6" stroke-width="2"/>
<line x1="611.3" y1="196.2" x2="625.3" y2="162.0" stroke="#c9a2a6" stroke-width="2"/>
<line x1="625.3" y1="162.0" x2="618.3" y2="169.2" stroke="#c9a2a6" stroke-width="2"/>
<line x1="625.3" y1="162.0" x2="625.3" y2="172.0" stroke="#c9a2a6" stroke-width="2"/>
<line x1="625.3" y1="162.0" x2="674.2" y2="196.2" stroke="#c9a2a6" stroke-width="2"/>
<line x1="674.2" y1="196.2" x2="668.7" y2="187.8" stroke="#c9a2a6" stroke-width="2"/>
<line x1="674.2" y1="196.2" x2="664.5" y2="194.0" stroke="#c9a2a6" stroke-width="2"/>
<line x1="674.2" y1="196.2" x2="633.5" y2="267.0" stroke="#c9a2a6" stroke-width="2"/>
<line x1="633.5" y1="267.0" x2="641.4" y2="260.8" stroke="#c9a2a6" stroke-width="2"/>
<line x1="633.5" y1="267.0" x2="634.9" y2="257.1" stroke="#c9a2a6" stroke-width="2"/>
<line x1="633.5" y1="267.0" x2="552.0" y2="218.0" stroke="#c9a2a6" stroke-width="2"/>
<line x1="552.0" y1="218.0" x2="558.0" y2="226.0" stroke="#c9a2a6" stroke-width="2"/>
<line x1="552.0" y1="218.0" x2="561.9" y2="219.6" stroke="#c9a2a6" stroke-width="2"/>
<line x1="552.0" y1="218.0" x2="581.3" y2="170.1" stroke="#c9a2a6" stroke-width="2"/>
<line x1="581.3" y1="170.1" x2="573.3" y2="176.1" stroke="#c9a2a6" stroke-width="2"/>
<line x1="581.3" y1="170.1" x2="579.7" y2="180.0" stroke="#c9a2a6" stroke-width="2"/>
<line x1="693.0" y1="540.5" x2="596.8" y2="517.7" stroke="#c9a2a6" stroke-width="2"/>
<line x1="596.8" y1="517.7" x2="605.0" y2="523.5" stroke="#c9a2a6" stroke-width="2"/>
<line x1="596.8" y1="517.7" x2="606.7" y2="516.2" stroke="#c9a2a6" stroke-width="2"/>
<line x1="596.8" y1="517.7" x2="581.5" y2="592.2" stroke="#c9a2a6" stroke-width="2"/>
<line x1="581.5" y1="592.2" x2="587.0" y2="583.9" stroke="#c9a2a6" stroke-width="2"/>
<line x1="581.5" y1="592.2" x2="579.7" y2="582.4" stroke="#c9a2a6" stroke-width="2"/>
<line x1="581.5" y1="592.2" x2="618.2" y2="604.4" stroke="#c9a2a6" stroke-width="2"/>
<line x1="618.2" y1="604.4" x2="610.6" y2="597.9" stroke="#c9a2a6" stroke-width="2"/>
<line x1="618.2" y1="604.4" x2="608.2" y2="605.0" stroke="#c9a2a6" stroke-width="2"/>
<line x1="618.2" y1="604.4" x2="670.2" y2="622.3" stroke="#c9a2a6" stroke-width="2"/>
<line x1="670.2" y1="622.3" x2="662.7" y2="615.7" stroke="#c9a2a6" stroke-width="2"/>
<line x1="670.2" y1="622.3" x2="660.2" y2="622.8" stroke="#c9a2a6" stroke-width="2"/>
<line x1="670.2" y1="622.3" x2="693.0" y2="540.5" stroke="#c9a2a6" stroke-width="2"/>
<line x1="693.0" y1="540.5" x2="686.9" y2="548.4" stroke="#c9a2a6" stroke-width="2"/>
<line x1="693.0" y1="540.5" x2="694.1" y2="550.4" stroke="#c9a2a6" stroke-width="2"/>
<line x1="410.6" y1="31.3" x2="462.2" y2="72.0" stroke="#c9a2a6" stroke-width="2"/>
<line x1="462.2" y1="72.0" x2="457.2" y2="63.3" stroke="#c9a2a6" stroke-width="2"/>
<line x1="462.2" y1="72.0" x2="452.6" y2="69.2" stroke="#c9a2a6" stroke-width="2"/>
<line x1="462.2" y1="72.0" x2="435.3" y2="106.2" stroke="#c9a2a6" stroke-width="2"/>
<line x1="435.3" y1="106.2" x2="444.0" y2="101.2" stroke="#c9a2a6" stroke-width="2"/>
<line x1="435.3" y1="106.2" x2="438.1" y2="96.6" stroke="#c9a2a6" stroke-width="2"/>
<line x1="435.3" y1="106.2" x2="383.7" y2="65.5" stroke="#c9a2a6" stroke-width="2"/>
<line x1="383.7" y1="65.5" x2="388.7" y2="74.2" stroke="#c9a2a6" stroke-width="2"/>
<line x1="383.7" y1="65.5" x2="393.3" y2="68.3" stroke="#c9a2a6" stroke-width="2"/>
<line x1="383.7" y1="65.5" x2="410.6" y2="31.3" stroke="#c9a2a6" stroke-width="2"/>
<line x1="410.6" y1="31.3" x2="401.9" y2="36.3" stroke="#c9a2a6" stroke-width="2"/>
<line x1="410.6" y1="31.3" x2="407.8" y2="40.9" stroke="#c9a2a6" stroke-width="2"/>
<line x1="586.9" y1="28.6" x2="603.1" y2="106.2" stroke="#c9a2a6" stroke-width="2"/>
<line x1="603.1" y1="106.2" x2="604.9" y2="96.4" stroke="#c9a2a6" stroke-width="2"/>
<line x1="603.1" y1="106.2" x2="597.5" y2="97.9" stroke="#c9a2a6" stroke-width="2"/>
<line x1="603.1" y1="106.2" x2="513.7" y2="121.1" stroke="#c9a2a6" stroke-width="2"/>
<line x1="513.7" y1="121.1" x2="523.5" y2="123.3" stroke="#c9a2a6" stroke-width="2"/>
<line x1="513.7" y1="121.1" x2="522.2" y2="115.9" stroke="#c9a2a6" stroke-width="2"/>
<line x1="513.7" y1="121.1" x2="496.9" y2="47.5" stroke="#c9a2a6" stroke-width="2"/>
<line x1="496.9" y1="47.5" x2="495.3" y2="57.4" stroke="#c9a2a6" stroke-width="2"/>
<line x1="496.9" y1="47.5" x2="502.6" y2="55.7" stroke="#c9a2a6" stroke-width="2"/>
<line x1="341.8" y1="107.4" x2="259.6" y2="91.8" stroke="#c9a2a6" stroke-width="2"/>
<line x1="259.6" y1="91.8" x2="268.0" y2="97.2" stroke="#c9a2a6" stroke-width="2"/>
<line x1="259.6" y1="91.8" x2="269.4" y2="89.8" stroke="#c9a2a6" stroke-width="2"/>
<line x1="259.6" y1="91.8" x2="248.2" y2="150.9" stroke="#c9a2a6" stroke-width="2"/>
<line x1="248.2" y1="150.9" x2="253.6" y2="142.5" stroke="#c9a2a6" stroke-width="2"/>
<line x1="248.2" y1="150.9" x2="246.3" y2="141.1" stroke="#c9a2a6" stroke-width="2"/>
<line x1="248.2" y1="150.9" x2="333.8" y2="166.1" stroke="#c9a2a6" stroke-width="2"/>
<line x1="333.8" y1="166.1" x2="325.3" y2="160.8" stroke="#c9a2a6" stroke-width="2"/>
<line x1="333.8" y1="166.1" x2="324.0" y2="168.2" stroke="#c9a2a6" stroke-width="2"/>
<line x1="390.8" y1="193.1" x2="345.2" y2="285.6" stroke="#f4f4f4" stroke-width="2"/>
<line x1="345.2" y1="285.6" x2="352.7" y2="278.9" stroke="#f4f4f4" stroke-width="2"/>
<line x1="345.2" y1="285.6" x2="345.9" y2="275.6" stroke="#f4f4f4" stroke-width="2"/>
<line x1="333.8" y1="166.1" x2="282.3" y2="259.7" stroke="#c9a2a6" stroke-width="2"/>
<line x1="282.3" y1="259.7" x2="290.1" y2="253.4" stroke="#c9a2a6" stroke-width="2"/>
<line x1="282.3" y1="259.7" x2="283.5" y2="249.8" stroke="#c9a2a6" stroke-width="2"/>
<line x1="282.3" y1="259.7" x2="345.2" y2="285.6" stroke="#c9a2a6" stroke-width="2"/>
<line x1="345.2" y1="285.6" x2="338.1" y2="278.6" stroke="#c9a2a6" stroke-width="2"/>
<line x1="345.2" y1="285.6" x2="335.2" y2="285.5" stroke="#c9a2a6" stroke-width="2"/>
<line x1="345.2" y1="285.6" x2="390.8" y2="193.1" stroke="#c9a2a6" stroke-width="2"/>
<line x1="390.8" y1="193.1" x2="383.3" y2="199.8" stroke="#c9a2a6" stroke-width="2"/>
<line x1="390.8" y1="193.1" x2="390.1" y2="203.1" stroke="#c9a2a6" stroke-width="2"/>
<line x1="447.5" y1="215.6" x2="427.3" y2="278.0" stroke="#c9a2a6" stroke-width="2"/>
<line x1="427.3" y1="278.0" x2="433.7" y2="270.3" stroke="#c9a2a6" stroke-width="2"/>
<line x1="427.3" y1="278.0" x2="426.6" y2="268.0" stroke="#c9a2a6" stroke-width="2"/>
<line x1="427.3" y1="278.0" x2="495.0" y2="304.0" stroke="#c9a2a6" stroke-width="2"/>
<line x1="495.0" y1="304.0" x2="487.7" y2="297.2" stroke="#c9a2a6" stroke-width="2"/>
<line x1="495.0" y1="304.0" x2="485.0" y2="304.2" stroke="#c9a2a6" stroke-width="2"/>
<line x1="495.0" y1="304.0" x2="517.4" y2="233.9" stroke="#c9a2a6" stroke-width="2"/>
<line x1="517.4" y1="233.9" x2="511.0" y2="241.6" stroke="#c9a2a6" stroke-width="2"/>
<line x1="517.4" y1="233.9" x2="518.1" y2="243.9" stroke="#c9a2a6" stroke-width="2"/>
<line x1="345.2" y1="285.6" x2="410.3" y2="310.3" stroke="#f4f4f4" stroke-width="2"/>
<line x1="410.3" y1="310.3" x2="403.0" y2="303.5" stroke="#f4f4f4" stroke-width="2"/>
<line x1="410.3" y1="310.3" x2="400.3" y2="310.5" stroke="#f4f4f4" stroke-width="2"/>
<line x1="410.3" y1="310.3" x2="447.5" y2="215.6" stroke="#f4f4f4" stroke-width="2"/>
<line x1="447.5" y1="215.6" x2="440.6" y2="222.9" stroke="#f4f4f4" stroke-width="2"/>
<line x1="447.5" y1="215.6" x2="447.6" y2="225.6" stroke="#f4f4f4" stroke-width="2"/>
<line x1="446.9" y1="217.1" x2="390.2" y2="194.6" stroke="#f4f4f4" stroke-width="2"/>
<line x1="390.2" y1="194.6" x2="397.4" y2="201.5" stroke="#f4f4f4" stroke-width="2"/>
<line x1="390.2" y1="194.6" x2="400.2" y2="194.5" stroke="#f4f4f4" stroke-width="2"/>
<line x1="390.2" y1="194.6" x2="333.2" y2="167.6" stroke="#f4f4f4" stroke-width="2"/>
<line x1="333.2" y1="167.6" x2="340.0" y2="175.0" stroke="#f4f4f4" stroke-width="2"/>
<line x1="333.2" y1="167.6" x2="343.2" y2="168.2" stroke="#f4f4f4" stroke-width="2"/>
<line x1="362.7" y1="91.0" x2="379.0" y2="52.0" stroke="#f4f4f4" stroke-width="2"/>
<line x1="362.7" y1="91.0" x2="369.7" y2="83.9" stroke="#f4f4f4" stroke-width="2"/>
<line x1="362.7" y1="91.0" x2="362.8" y2="81.0" stroke="#f4f4f4" stroke-width="2"/>
<line x1="333.8" y1="166.1" x2="341.8" y2="107.4" stroke="#a9dcc4" stroke-width="2"/>
<line x1="341.8" y1="107.4" x2="336.8" y2="116.1" stroke="#a9dcc4" stroke-width="2"/>
<line x1="341.8" y1="107.4" x2="344.3" y2="117.1" stroke="#a9dcc4" stroke-width="2"/>
<line x1="341.8" y1="107.4" x2="362.7" y2="91.0" stroke="#a9dcc4" stroke-width="2"/>
<line x1="362.7" y1="91.0" x2="353.1" y2="93.8" stroke="#a9dcc4" stroke-width="2"/>
<line x1="362.7" y1="91.0" x2="357.7" y2="99.7" stroke="#a9dcc4" stroke-width="2"/>
<line x1="440.4" y1="135.2" x2="428.2" y2="164.1" stroke="#a9dcc4" stroke-width="2"/>
<line x1="428.2" y1="164.1" x2="435.3" y2="157.0" stroke="#a9dcc4" stroke-width="2"/>
<line x1="428.2" y1="164.1" x2="428.4" y2="154.1" stroke="#a9dcc4" stroke-width="2"/>
<line x1="428.2" y1="164.1" x2="413.6" y2="199.4" stroke="#a9dcc4" stroke-width="2"/>
<line x1="413.6" y1="199.4" x2="420.6" y2="192.3" stroke="#a9dcc4" stroke-width="2"/>
<line x1="413.6" y1="199.4" x2="413.7" y2="189.4" stroke="#a9dcc4" stroke-width="2"/>
<line x1="440.4" y1="135.2" x2="433.3" y2="142.3" stroke="#a9dcc4" stroke-width="2"/>
<line x1="440.4" y1="135.2" x2="440.2" y2="145.2" stroke="#a9dcc4" stroke-width="2"/>
<line x1="428.2" y1="164.1" x2="421.2" y2="171.2" stroke="#a9dcc4" stroke-width="2"/>
<line x1="428.2" y1="164.1" x2="428.1" y2="174.1" stroke="#a9dcc4" stroke-width="2"/>
<line x1="413.6" y1="199.4" x2="333.8" y2="166.1" stroke="#a9dcc4" stroke-width="2"/>
<line x1="333.8" y1="166.1" x2="340.9" y2="173.1" stroke="#a9dcc4" stroke-width="2"/>
<line x1="333.8" y1="166.1" x2="343.8" y2="166.2" stroke="#a9dcc4" stroke-width="2"/>
<line x1="536.8" y1="188.3" x2="517.4" y2="233.9" stroke="#a9dcc4" stroke-width="2"/>
<line x1="517.4" y1="233.9" x2="524.5" y2="226.8" stroke="#a9dcc4" stroke-width="2"/>
<line x1="517.4" y1="233.9" x2="517.6" y2="223.9" stroke="#a9dcc4" stroke-width="2"/>
<line x1="517.4" y1="233.9" x2="473.5" y2="220.1" stroke="#a9dcc4" stroke-width="2"/>
<line x1="473.5" y1="220.1" x2="481.2" y2="226.5" stroke="#a9dcc4" stroke-width="2"/>
<line x1="473.5" y1="220.1" x2="483.5" y2="219.3" stroke="#a9dcc4" stroke-width="2"/>
<line x1="473.5" y1="220.1" x2="447.5" y2="215.6" stroke="#a9dcc4" stroke-width="2"/>
<line x1="447.5" y1="215.6" x2="456.0" y2="220.9" stroke="#a9dcc4" stroke-width="2"/>
<line x1="447.5" y1="215.6" x2="457.3" y2="213.5" stroke="#a9dcc4" stroke-width="2"/>
<line x1="447.5" y1="215.6" x2="413.6" y2="199.4" stroke="#a9dcc4" stroke-width="2"/>
<line x1="413.6" y1="199.4" x2="420.4" y2="206.8" stroke="#a9dcc4" stroke-width="2"/>
<line x1="413.6" y1="199.4" x2="423.6" y2="200.0" stroke="#a9dcc4" stroke-width="2"/>
<line x1="484.8" y1="177.5" x2="473.5" y2="220.1" stroke="#74787c" stroke-width="2"/>
<line x1="473.5" y1="220.1" x2="479.5" y2="212.1" stroke="#74787c" stroke-width="2"/>
<line x1="473.5" y1="220.1" x2="472.3" y2="210.2" stroke="#74787c" stroke-width="2"/>
<line x1="428.2" y1="164.1" x2="484.8" y2="177.5" stroke="#f6f68a" stroke-width="2"/>
<line x1="484.8" y1="177.5" x2="476.6" y2="171.7" stroke="#f6f68a" stroke-width="2"/>
<line x1="484.8" y1="177.5" x2="474.9" y2="179.0" stroke="#f6f68a" stroke-width="2"/>
<line x1="484.8" y1="177.5" x2="536.8" y2="188.3" stroke="#f6f68a" stroke-width="2"/>
<line x1="536.8" y1="188.3" x2="528.5" y2="182.7" stroke="#f6f68a" stroke-width="2"/>
<line x1="536.8" y1="188.3" x2="527.0" y2="190.1" stroke="#f6f68a" stroke-width="2"/>
<line x1="428.2" y1="164.1" x2="436.4" y2="169.9" stroke="#f6f68a" stroke-width="2"/>
<line x1="428.2" y1="164.1" x2="438.1" y2="162.6" stroke="#f6f68a" stroke-width="2"/>
<line x1="484.8" y1="177.5" x2="493.1" y2="183.1" stroke="#f6f68a" stroke-width="2"/>
<line x1="484.8" y1="177.5" x2="494.6" y2="175.7" stroke="#f6f68a" stroke-width="2"/>
<line x1="546.0" y1="153.1" x2="536.8" y2="188.3" stroke="#f6f68a" stroke-width="2"/>
<line x1="536.8" y1="188.3" x2="542.8" y2="180.3" stroke="#f6f68a" stroke-width="2"/>
<line x1="536.8" y1="188.3" x2="535.5" y2="178.4" stroke="#f6f68a" stroke-width="2"/>
<line x1="362.7" y1="91.0" x2="324.0" y2="78.5" stroke="#f4f4f4" stroke-width="2"/>
<line x1="324.0" y1="78.5" x2="331.7" y2="84.9" stroke="#f4f4f4" stroke-width="2"/>
<line x1="324.0" y1="78.5" x2="334.0" y2="77.8" stroke="#f4f4f4" stroke-width="2"/>
<line x1="324.0" y1="78.5" x2="261.5" y2="56.8" stroke="#f4f4f4" stroke-width="2"/>
<line x1="261.5" y1="56.8" x2="269.0" y2="63.4" stroke="#f4f4f4" stroke-width="2"/>
<line x1="261.5" y1="56.8" x2="271.5" y2="56.3" stroke="#f4f4f4" stroke-width="2"/>
<line x1="362.7" y1="91.0" x2="440.4" y2="135.2" stroke="#a9dcc4" stroke-width="2"/>
<line x1="440.4" y1="135.2" x2="475.6" y2="147.4" stroke="#f6f68a" stroke-width="2"/>
<line x1="475.6" y1="147.4" x2="468.1" y2="140.8" stroke="#f6f68a" stroke-width="2"/>
<line x1="475.6" y1="147.4" x2="465.6" y2="147.9" stroke="#f6f68a" stroke-width="2"/>
<line x1="261.5" y1="56.8" x2="324.0" y2="78.5" stroke="#f6f68a" stroke-width="2"/>
<line x1="324.0" y1="78.5" x2="316.5" y2="71.9" stroke="#f6f68a" stroke-width="2"/>
<line x1="324.0" y1="78.5" x2="314.0" y2="79.0" stroke="#f6f68a" stroke-width="2"/>
<line x1="324.0" y1="78.5" x2="362.7" y2="91.0" stroke="#f6f68a" stroke-width="2"/>
<line x1="362.7" y1="91.0" x2="355.0" y2="84.6" stroke="#f6f68a" stroke-width="2"/>
<line x1="362.7" y1="91.0" x2="352.7" y2="91.7" stroke="#f6f68a" stroke-width="2"/>
<line x1="362.7" y1="91.0" x2="429.5" y2="126.0" stroke="#f6f68a" stroke-width="2"/>
<line x1="429.5" y1="126.0" x2="423.0" y2="118.4" stroke="#f6f68a" stroke-width="2"/>
<line x1="429.5" y1="126.0" x2="419.5" y2="125.0" stroke="#f6f68a" stroke-width="2"/>
<line x1="429.5" y1="126.0" x2="475.6" y2="147.4" stroke="#f6f68a" stroke-width="2"/>
<line x1="475.6" y1="147.4" x2="468.8" y2="140.1" stroke="#f6f68a" stroke-width="2"/>
<line x1="475.6" y1="147.4" x2="465.6" y2="146.9" stroke="#f6f68a" stroke-width="2"/>
<line x1="475.6" y1="147.4" x2="509.6" y2="150.9" stroke="#f6f68a" stroke-width="2"/>
<line x1="509.6" y1="150.9" x2="500.8" y2="146.2" stroke="#f6f68a" stroke-width="2"/>
<line x1="509.6" y1="150.9" x2="500.0" y2="153.7" stroke="#f6f68a" stroke-width="2"/>
<line x1="509.6" y1="150.9" x2="546.0" y2="153.1" stroke="#f6f68a" stroke-width="2"/>
<line x1="546.0" y1="153.1" x2="537.0" y2="148.8" stroke="#f6f68a" stroke-width="2"/>
<line x1="546.0" y1="153.1" x2="536.5" y2="156.3" stroke="#f6f68a" stroke-width="2"/>
<line x1="546.0" y1="153.1" x2="658.0" y2="127.3" stroke="#f6f68a" stroke-width="2"/>
<line x1="658.0" y1="127.3" x2="648.1" y2="125.7" stroke="#f6f68a" stroke-width="2"/>
<line x1="658.0" y1="127.3" x2="649.8" y2="133.0" stroke="#f6f68a" stroke-width="2"/>
<line x1="658.0" y1="127.3" x2="756.8" y2="96.4" stroke="#f6f68a" stroke-width="2"/>
<line x1="756.8" y1="96.4" x2="746.8" y2="95.6" stroke="#f6f68a" stroke-width="2"/>
<line x1="756.8" y1="96.4" x2="749.1" y2="102.7" stroke="#f6f68a" stroke-width="2"/>
<line x1="756.8" y1="96.4" x2="830.8" y2="95.0" stroke="#f6f68a" stroke-width="2"/>
<line x1="830.8" y1="95.0" x2="821.5" y2="91.4" stroke="#f6f68a" stroke-width="2"/>
<line x1="830.8" y1="95.0" x2="821.6" y2="98.9" stroke="#f6f68a" stroke-width="2"/>
<line x1="830.8" y1="95.0" x2="911.6" y2="111.2" stroke="#f6f68a" stroke-width="2"/>
<line x1="911.6" y1="111.2" x2="903.2" y2="105.7" stroke="#f6f68a" stroke-width="2"/>
<line x1="911.6" y1="111.2" x2="901.8" y2="113.1" stroke="#f6f68a" stroke-width="2"/>
<line x1="911.6" y1="111.2" x2="965.0" y2="135.0" stroke="#f6f68a" stroke-width="2"/>
<line x1="965.0" y1="135.0" x2="958.1" y2="127.8" stroke="#f6f68a" stroke-width="2"/>
<line x1="965.0" y1="135.0" x2="955.0" y2="134.6" stroke="#f6f68a" stroke-width="2"/>
<line x1="563.0" y1="439.7" x2="550.7" y2="567.0" stroke="#b9bdc2" stroke-width="2"/>
<line x1="550.7" y1="567.0" x2="555.3" y2="558.1" stroke="#b9bdc2" stroke-width="2"/>
<line x1="550.7" y1="567.0" x2="547.9" y2="557.4" stroke="#b9bdc2" stroke-width="2"/>
<line x1="550.7" y1="567.0" x2="577.2" y2="648.2" stroke="#b9bdc2" stroke-width="2"/>
<line x1="577.2" y1="648.2" x2="577.9" y2="638.2" stroke="#b9bdc2" stroke-width="2"/>
<line x1="577.2" y1="648.2" x2="570.8" y2="640.5" stroke="#b9bdc2" stroke-width="2"/>
<line x1="577.2" y1="648.2" x2="620.0" y2="700.0" stroke="#b9bdc2" stroke-width="2"/>
<line x1="620.0" y1="700.0" x2="617.0" y2="690.5" stroke="#b9bdc2" stroke-width="2"/>
<line x1="620.0" y1="700.0" x2="611.2" y2="695.2" stroke="#b9bdc2" stroke-width="2"/>
<line x1="563.0" y1="439.7" x2="558.4" y2="448.6" stroke="#b9bdc2" stroke-width="2"/>
<line x1="563.0" y1="439.7" x2="565.8" y2="449.3" stroke="#b9bdc2" stroke-width="2"/>
<line x1="111.6" y1="285.9" x2="130.5" y2="285.9" stroke="#f21414" stroke-width="2"/>
<line x1="130.5" y1="285.9" x2="121.2" y2="282.2" stroke="#f21414" stroke-width="2"/>
<line x1="130.5" y1="285.9" x2="121.2" y2="289.6" stroke="#f21414" stroke-width="2"/>
<line x1="130.5" y1="285.9" x2="175.3" y2="342.3" stroke="#f21414" stroke-width="2"/>
<line x1="175.3" y1="342.3" x2="172.5" y2="332.7" stroke="#f21414" stroke-width="2"/>
<line x1="175.3" y1="342.3" x2="166.6" y2="337.4" stroke="#f21414" stroke-width="2"/>
<line x1="175.3" y1="342.3" x2="201.5" y2="383.4" stroke="#f21414" stroke-width="2"/>
<line x1="201.5" y1="383.4" x2="199.7" y2="373.6" stroke="#f21414" stroke-width="2"/>
<line x1="201.5" y1="383.4" x2="193.4" y2="377.6" stroke="#f21414" stroke-width="2"/>
<line x1="201.5" y1="383.4" x2="220.4" y2="398.4" stroke="#f21414" stroke-width="2"/>
<line x1="220.4" y1="398.4" x2="215.5" y2="389.7" stroke="#f21414" stroke-width="2"/>
<line x1="220.4" y1="398.4" x2="210.8" y2="395.6" stroke="#f21414" stroke-width="2"/>
<line x1="220.4" y1="398.4" x2="250.3" y2="402.3" stroke="#f21414" stroke-width="2"/>
<line x1="250.3" y1="402.3" x2="241.6" y2="397.4" stroke="#f21414" stroke-width="2"/>
<line x1="250.3" y1="402.3" x2="240.6" y2="404.8" stroke="#f21414" stroke-width="2"/>
<line x1="250.3" y1="402.3" x2="294.5" y2="420.0" stroke="#f21414" stroke-width="2"/>
<line x1="294.5" y1="420.0" x2="287.3" y2="413.1" stroke="#f21414" stroke-width="2"/>
<line x1="294.5" y1="420.0" x2="284.5" y2="420.0" stroke="#f21414" stroke-width="2"/>
<line x1="294.5" y1="420.0" x2="403.4" y2="424.4" stroke="#f21414" stroke-width="2"/>
<line x1="403.4" y1="424.4" x2="394.3" y2="420.3" stroke="#f21414" stroke-width="2"/>
<line x1="403.4" y1="424.4" x2="394.0" y2="427.8" stroke="#f21414" stroke-width="2"/>
<line x1="403.4" y1="424.4" x2="496.3" y2="435.0" stroke="#f21414" stroke-width="2"/>
<line x1="496.3" y1="435.0" x2="487.5" y2="430.2" stroke="#f21414" stroke-width="2"/>
<line x1="496.3" y1="435.0" x2="486.7" y2="437.7" stroke="#f21414" stroke-width="2"/>
<line x1="496.3" y1="435.0" x2="563.0" y2="439.7" stroke="#f21414" stroke-width="2"/>
<line x1="563.0" y1="439.7" x2="554.0" y2="435.3" stroke="#f21414" stroke-width="2"/>
<line x1="563.0" y1="439.7" x2="553.5" y2="442.8" stroke="#f21414" stroke-width="2"/>
<line x1="563.0" y1="439.7" x2="563.0" y2="361.1" stroke="#f21414" stroke-width="2"/>
<line x1="563.0" y1="361.1" x2="559.3" y2="370.4" stroke="#f21414" stroke-width="2"/>
<line x1="563.0" y1="361.1" x2="566.7" y2="370.4" stroke="#f21414" stroke-width="2"/>
<line x1="563.0" y1="361.1" x2="563.5" y2="308.6" stroke="#f21414" stroke-width="2"/>
<line x1="563.5" y1="308.6" x2="559.7" y2="317.8" stroke="#f21414" stroke-width="2"/>
<line x1="563.5" y1="308.6" x2="567.2" y2="317.9" stroke="#f21414" stroke-width="2"/>
<line x1="563.5" y1="308.6" x2="563.4" y2="263.0" stroke="#f21414" stroke-width="2"/>
<line x1="563.4" y1="263.0" x2="559.7" y2="272.3" stroke="#f21414" stroke-width="2"/>
<line x1="563.4" y1="263.0" x2="567.2" y2="272.3" stroke="#f21414" stroke-width="2"/>
<line x1="563.4" y1="263.0" x2="537.4" y2="222.3" stroke="#f21414" stroke-width="2"/>
<line x1="537.4" y1="222.3" x2="539.2" y2="232.1" stroke="#f21414" stroke-width="2"/>
<line x1="537.4" y1="222.3" x2="545.5" y2="228.1" stroke="#f21414" stroke-width="2"/>
<line x1="537.4" y1="222.3" x2="546.0" y2="153.1" stroke="#f21414" stroke-width="2"/>
<line x1="546.0" y1="153.1" x2="541.1" y2="161.8" stroke="#f21414" stroke-width="2"/>
<line x1="546.0" y1="153.1" x2="548.6" y2="162.8" stroke="#f21414" stroke-width="2"/>
<path d="M323.5 316.5h10M328.5 311.5v10" stroke="#f2f21c" stroke-width="1" fill="none"/>
<path d="M363.5 358.5h10M368.5 353.5v10" stroke="#f2f21c" stroke-width="1" fill="none"/>
<path d="M322.5 394.5h10M327.5 389.5v10" stroke="#f2f21c" stroke-width="1" fill="none"/>
<path d="M283.5 351.5h10M288.5 346.5v10" stroke="#f2f21c" stroke-width="1" fill="none"/>
<path d="M469.5 329.5h10M474.5 324.5v10" stroke="#f2f21c" stroke-width="1" fill="none"/>
<path d="M510.5 368.5h10M515.5 363.5v10" stroke="#f2f21c" stroke-width="1" fill="none"/>
<path d="M475.5 407.5h10M480.5 402.5v10" stroke="#f2f21c" stroke-width="1" fill="none"/>
<path d="M434.5 368.5h10M439.5 363.5v10" stroke="#f2f21c" stroke-width="1" fill="none"/>
<path d="M316.5 459.5h10M321.5 454.5v10" stroke="#f2f21c" stroke-width="1" fill="none"/>
<path d="M357.5 502.5h10M362.5 497.5v10" stroke="#f2f21c" stroke-width="1" fill="none"/>
<path d="M312.5 539.5h10M317.5 534.5v10" stroke="#f2f21c" stroke-width="1" fill="none"/>
<path d="M271.5 496.5h10M276.5 491.5v10" stroke="#f2f21c" stroke-width="1" fill="none"/>
<path d="M467.5 472.5h10M472.5 467.5v10" stroke="#f2f21c" stroke-width="1" fill="none"/>
<path d="M428.5 512.5h10M433.5 507.5v10" stroke="#f2f21c" stroke-width="1" fill="none"/>
<path d="M467.5 555.5h10M472.5 550.5v10" stroke="#f2f21c" stroke-width="1" fill="none"/>
<path d="M506.5 516.5h10M511.5 511.5v10" stroke="#f2f21c" stroke-width="1" fill="none"/>
<path d="M592.5 626.5h10M597.5 621.5v10" stroke="#f2f21c" stroke-width="1" fill="none"/>
<path d="M644.5 179.5h10M649.5 174.5v10" stroke="#f2f21c" stroke-width="1" fill="none"/>
<path d="M648.5 231.5h10M653.5 226.5v10" stroke="#f2f21c" stroke-width="1" fill="none"/>
<path d="M587.5 242.5h10M592.5 237.5v10" stroke="#f2f21c" stroke-width="1" fill="none"/>
<path d="M561.5 194.5h10M566.5 189.5v10" stroke="#f2f21c" stroke-width="1" fill="none"/>
<path d="M639.5 529.5h10M644.5 524.5v10" stroke="#f2f21c" stroke-width="1" fill="none"/>
<path d="M584.5 554.5h10M589.5 549.5v10" stroke="#f2f21c" stroke-width="1" fill="none"/>
<path d="M676.5 581.5h10M681.5 576.5v10" stroke="#f2f21c" stroke-width="1" fill="none"/>
<path d="M431.5 51.5h10M436.5 46.5v10" stroke="#f2f21c" stroke-width="1" fill="none"/>
<path d="M404.5 85.5h10M409.5 80.5v10" stroke="#f2f21c" stroke-width="1" fill="none"/>
<path d="M590.5 67.5h10M595.5 62.5v10" stroke="#f2f21c" stroke-width="1" fill="none"/>
<path d="M553.5 113.5h10M558.5 108.5v10" stroke="#f2f21c" stroke-width="1" fill="none"/>
<path d="M500.5 84.5h10M505.5 79.5v10" stroke="#f2f21c" stroke-width="1" fill="none"/>
<path d="M295.5 99.5h10M300.5 94.5v10" stroke="#f2f21c" stroke-width="1" fill="none"/>
<path d="M248.5 121.5h10M253.5 116.5v10" stroke="#f2f21c" stroke-width="1" fill="none"/>
<path d="M286.5 158.5h10M291.5 153.5v10" stroke="#f2f21c" stroke-width="1" fill="none"/>
<path d="M303.5 212.5h10M308.5 207.5v10" stroke="#f2f21c" stroke-width="1" fill="none"/>
<path d="M308.5 272.5h10M313.5 267.5v10" stroke="#f2f21c" stroke-width="1" fill="none"/>
<path d="M363.5 239.5h10M368.5 234.5v10" stroke="#f2f21c" stroke-width="1" fill="none"/>
<path d="M432.5 246.5h10M437.5 241.5v10" stroke="#f2f21c" stroke-width="1" fill="none"/>
<path d="M456.5 291.5h10M461.5 286.5v10" stroke="#f2f21c" stroke-width="1" fill="none"/>
<path d="M501.5 268.5h10M506.5 263.5v10" stroke="#f2f21c" stroke-width="1" fill="none"/>
<path d="M372.5 297.5h10M377.5 292.5v10" stroke="#f2f21c" stroke-width="1" fill="none"/>
<path d="M423.5 262.5h10M428.5 257.5v10" stroke="#f2f21c" stroke-width="1" fill="none"/>
<path d="M287.5 67.5h10M292.5 62.5v10" stroke="#f2f21c" stroke-width="1" fill="none"/>
<path d="M391.5 108.5h10M396.5 103.5v10" stroke="#f2f21c" stroke-width="1" fill="none"/>
<path d="M597.5 140.5h10M602.5 135.5v10" stroke="#f2f21c" stroke-width="1" fill="none"/>
<path d="M702.5 111.5h10M707.5 106.5v10" stroke="#f2f21c" stroke-width="1" fill="none"/>
<path d="M788.5 95.5h10M793.5 90.5v10" stroke="#f2f21c" stroke-width="1" fill="none"/>
<path d="M866.5 103.5h10M871.5 98.5v10" stroke="#f2f21c" stroke-width="1" fill="none"/>
<path d="M933.5 123.5h10M938.5 118.5v10" stroke="#f2f21c" stroke-width="1" fill="none"/>
<path d="M551.5 503.5h10M556.5 498.5v10" stroke="#f2f21c" stroke-width="1" fill="none"/>
<path d="M558.5 607.5h10M563.5 602.5v10" stroke="#f2f21c" stroke-width="1" fill="none"/>
<path d="M593.5 674.5h10M598.5 669.5v10" stroke="#f2f21c" stroke-width="1" fill="none"/>
<path d="M147.5 314.5h10M152.5 309.5v10" stroke="#f2f21c" stroke-width="1" fill="none"/>
<path d="M343.5 422.5h10M348.5 417.5v10" stroke="#f2f21c" stroke-width="1" fill="none"/>
<path d="M444.5 429.5h10M449.5 424.5v10" stroke="#f2f21c" stroke-width="1" fill="none"/>
<path d="M524.5 437.5h10M529.5 432.5v10" stroke="#f2f21c" stroke-width="1" fill="none"/>
<path d="M558.5 400.5h10M563.5 395.5v10" stroke="#f2f21c" stroke-width="1" fill="none"/>
<path d="M536.5 187.5h10M541.5 182.5v10" stroke="#f2f21c" stroke-width="1" fill="none"/>
<path d="M369.5 65.5h10M374.5 60.5v10" stroke="#f2f21c" stroke-width="1" fill="none"/>
<path d="M368.5 182.5h10M373.5 177.5v10" stroke="#f2f21c" stroke-width="1" fill="none"/>
<path d="M627.5 625.5h10M632.5 620.5v10" stroke="#f2f21c" stroke-width="1" fill="none"/>
<path d="M592.5 665.5h10M597.5 660.5v10" stroke="#f2f21c" stroke-width="1" fill="none"/>
<path d="M396.5 113.5h10M401.5 108.5v10" stroke="#f2f21c" stroke-width="1" fill="none"/>
<path d="M438.5 210.5h10M443.5 205.5v10" stroke="#f2f21c" stroke-width="1" fill="none"/>
<path d="M477.5 225.5h10M482.5 220.5v10" stroke="#f2f21c" stroke-width="1" fill="none"/>
<path d="M357.5 179.5h10M362.5 174.5v10" stroke="#f2f21c" stroke-width="1" fill="none"/>
<rect x="288.5" y="307.5" width="2" height="2" fill="#5a5a14" stroke="#f2f21c" stroke-width="1"/>
<rect x="367.5" y="322.5" width="2" height="2" fill="#5a5a14" stroke="#f2f21c" stroke-width="1"/>
<rect x="367.5" y="393.5" width="2" height="2" fill="#5a5a14" stroke="#f2f21c" stroke-width="1"/>
<rect x="285.5" y="393.5" width="2" height="2" fill="#5a5a14" stroke="#f2f21c" stroke-width="1"/>
<rect x="434.5" y="326.5" width="2" height="2" fill="#5a5a14" stroke="#f2f21c" stroke-width="1"/>
<rect x="512.5" y="329.5" width="2" height="2" fill="#5a5a14" stroke="#f2f21c" stroke-width="1"/>
<rect x="516.5" y="404.5" width="2" height="2" fill="#5a5a14" stroke="#f2f21c" stroke-width="1"/>
<rect x="441.5" y="408.5" width="2" height="2" fill="#5a5a14" stroke="#f2f21c" stroke-width="1"/>
<rect x="278.5" y="456.5" width="2" height="2" fill="#5a5a14" stroke="#f2f21c" stroke-width="1"/>
<rect x="363.5" y="460.5" width="2" height="2" fill="#5a5a14" stroke="#f2f21c" stroke-width="1"/>
<rect x="359.5" y="542.5" width="2" height="2" fill="#5a5a14" stroke="#f2f21c" stroke-width="1"/>
<rect x="273.5" y="535.5" width="2" height="2" fill="#5a5a14" stroke="#f2f21c" stroke-width="1"/>
<rect x="509.5" y="475.5" width="2" height="2" fill="#5a5a14" stroke="#f2f21c" stroke-width="1"/>
<rect x="434.5" y="468.5" width="2" height="2" fill="#5a5a14" stroke="#f2f21c" stroke-width="1"/>
<rect x="430.5" y="554.5" width="2" height="2" fill="#5a5a14" stroke="#f2f21c" stroke-width="1"/>
<rect x="511.5" y="554.5" width="2" height="2" fill="#5a5a14" stroke="#f2f21c" stroke-width="1"/>
<rect x="576.5" y="647.5" width="2" height="2" fill="#5a5a14" stroke="#f2f21c" stroke-width="1"/>
<rect x="617.5" y="603.5" width="2" height="2" fill="#5a5a14" stroke="#f2f21c" stroke-width="1"/>
<rect x="646.5" y="646.5" width="2" height="2" fill="#5a5a14" stroke="#f2f21c" stroke-width="1"/>
<rect x="617.5" y="681.5" width="2" height="2" fill="#5a5a14" stroke="#f2f21c" stroke-width="1"/>
<rect x="580.5" y="169.5" width="2" height="2" fill="#5a5a14" stroke="#f2f21c" stroke-width="1"/>
<rect x="610.5" y="195.5" width="2" height="2" fill="#5a5a14" stroke="#f2f21c" stroke-width="1"/>
<rect x="624.5" y="161.5" width="2" height="2" fill="#5a5a14" stroke="#f2f21c" stroke-width="1"/>
<rect x="673.5" y="195.5" width="2" height="2" fill="#5a5a14" stroke="#f2f21c" stroke-width="1"/>
<rect x="632.5" y="266.5" width="2" height="2" fill="#5a5a14" stroke="#f2f21c" stroke-width="1"/>
<rect x="551.5" y="217.5" width="2" height="2" fill="#5a5a14" stroke="#f2f21c" stroke-width="1"/>
<rect x="692.5" y="539.5" width="2" height="2" fill="#5a5a14" stroke="#f2f21c" stroke-width="1"/>
<rect x="595.5" y="516.5" width="2" height="2" fill="#5a5a14" stroke="#f2f21c" stroke-width="1"/>
<rect x="580.5" y="591.5" width="2" height="2" fill="#5a5a14" stroke="#f2f21c" stroke-width="1"/>
<rect x="580.5" y="591.5" width="2" height="2" fill="#5a5a14" stroke="#f2f21c" stroke-width="1"/>
<rect x="617.5" y="603.5" width="2" height="2" fill="#5a5a14" stroke="#f2f21c" stroke-width="1"/>
<rect x="669.5" y="621.5" width="2" height="2" fill="#5a5a14" stroke="#f2f21c" stroke-width="1"/>
<rect x="669.5" y="621.5" width="2" height="2" fill="#5a5a14" stroke="#f2f21c" stroke-width="1"/>
<rect x="692.5" y="539.5" width="2" height="2" fill="#5a5a14" stroke="#f2f21c" stroke-width="1"/>
<rect x="409.5" y="30.5" width="2" height="2" fill="#5a5a14" stroke="#f2f21c" stroke-width="1"/>
<rect x="461.5" y="71.5" width="2" height="2" fill="#5a5a14" stroke="#f2f21c" stroke-width="1"/>
<rect x="434.5" y="105.5" width="2" height="2" fill="#5a5a14" stroke="#f2f21c" stroke-width="1"/>
<rect x="382.5" y="64.5" width="2" height="2" fill="#5a5a14" stroke="#f2f21c" stroke-width="1"/>
<rect x="585.5" y="27.5" width="2" height="2" fill="#5a5a14" stroke="#f2f21c" stroke-width="1"/>
<rect x="602.5" y="105.5" width="2" height="2" fill="#5a5a14" stroke="#f2f21c" stroke-width="1"/>
<rect x="512.5" y="120.5" width="2" height="2" fill="#5a5a14" stroke="#f2f21c" stroke-width="1"/>
<rect x="495.5" y="46.5" width="2" height="2" fill="#5a5a14" stroke="#f2f21c" stroke-width="1"/>
<rect x="340.5" y="106.5" width="2" height="2" fill="#5a5a14" stroke="#f2f21c" stroke-width="1"/>
<rect x="258.5" y="90.5" width="2" height="2" fill="#5a5a14" stroke="#f2f21c" stroke-width="1"/>
<rect x="247.5" y="149.5" width="2" height="2" fill="#5a5a14" stroke="#f2f21c" stroke-width="1"/>
<rect x="332.5" y="165.5" width="2" height="2" fill="#5a5a14" stroke="#f2f21c" stroke-width="1"/>
<rect x="389.5" y="192.5" width="2" height="2" fill="#5a5a14" stroke="#f2f21c" stroke-width="1"/>
<rect x="344.5" y="284.5" width="2" height="2" fill="#5a5a14" stroke="#f2f21c" stroke-width="1"/>
<rect x="332.5" y="165.5" width="2" height="2" fill="#5a5a14" stroke="#f2f21c" stroke-width="1"/>
<rect x="281.5" y="258.5" width="2" height="2" fill="#5a5a14" stroke="#f2f21c" stroke-width="1"/>
<rect x="344.5" y="284.5" width="2" height="2" fill="#5a5a14" stroke="#f2f21c" stroke-width="1"/>
<rect x="389.5" y="192.5" width="2" height="2" fill="#5a5a14" stroke="#f2f21c" stroke-width="1"/>
<rect x="446.5" y="214.5" width="2" height="2" fill="#5a5a14" stroke="#f2f21c" stroke-width="1"/>
<rect x="426.5" y="277.5" width="2" height="2" fill="#5a5a14" stroke="#f2f21c" stroke-width="1"/>
<rect x="494.5" y="303.5" width="2" height="2" fill="#5a5a14" stroke="#f2f21c" stroke-width="1"/>
<rect x="516.5" y="232.5" width="2" height="2" fill="#5a5a14" stroke="#f2f21c" stroke-width="1"/>
<rect x="344.5" y="284.5" width="2" height="2" fill="#5a5a14" stroke="#f2f21c" stroke-width="1"/>
<rect x="409.5" y="309.5" width="2" height="2" fill="#5a5a14" stroke="#f2f21c" stroke-width="1"/>
<rect x="446.5" y="214.5" width="2" height="2" fill="#5a5a14" stroke="#f2f21c" stroke-width="1"/>
<rect x="445.5" y="216.5" width="2" height="2" fill="#5a5a14" stroke="#f2f21c" stroke-width="1"/>
<rect x="389.5" y="193.5" width="2" height="2" fill="#5a5a14" stroke="#f2f21c" stroke-width="1"/>
<rect x="332.5" y="166.5" width="2" height="2" fill="#5a5a14" stroke="#f2f21c" stroke-width="1"/>
<rect x="361.5" y="90.5" width="2" height="2" fill="#5a5a14" stroke="#f2f21c" stroke-width="1"/>
<rect x="378.5" y="51.5" width="2" height="2" fill="#5a5a14" stroke="#f2f21c" stroke-width="1"/>
<rect x="332.5" y="165.5" width="2" height="2" fill="#5a5a14" stroke="#f2f21c" stroke-width="1"/>
<rect x="340.5" y="106.5" width="2" height="2" fill="#5a5a14" stroke="#f2f21c" stroke-width="1"/>
<rect x="361.5" y="90.5" width="2" height="2" fill="#5a5a14" stroke="#f2f21c" stroke-width="1"/>
<rect x="439.5" y="134.5" width="2" height="2" fill="#5a5a14" stroke="#f2f21c" stroke-width="1"/>
<rect x="427.5" y="163.5" width="2" height="2" fill="#5a5a14" stroke="#f2f21c" stroke-width="1"/>
<rect x="412.5" y="198.5" width="2" height="2" fill="#5a5a14" stroke="#f2f21c" stroke-width="1"/>
<rect x="412.5" y="198.5" width="2" height="2" fill="#5a5a14" stroke="#f2f21c" stroke-width="1"/>
<rect x="332.5" y="165.5" width="2" height="2" fill="#5a5a14" stroke="#f2f21c" stroke-width="1"/>
<rect x="535.5" y="187.5" width="2" height="2" fill="#5a5a14" stroke="#f2f21c" stroke-width="1"/>
<rect x="516.5" y="232.5" width="2" height="2" fill="#5a5a14" stroke="#f2f21c" stroke-width="1"/>
<rect x="516.5" y="232.5" width="2" height="2" fill="#5a5a14" stroke="#f2f21c" stroke-width="1"/>
<rect x="472.5" y="219.5" width="2" height="2" fill="#5a5a14" stroke="#f2f21c" stroke-width="1"/>
<rect x="446.5" y="214.5" width="2" height="2" fill="#5a5a14" stroke="#f2f21c" stroke-width="1"/>
<rect x="412.5" y="198.5" width="2" height="2" fill="#5a5a14" stroke="#f2f21c" stroke-width="1"/>
<rect x="483.5" y="176.5" width="2" height="2" fill="#5a5a14" stroke="#f2f21c" stroke-width="1"/>
<rect x="472.5" y="219.5" width="2" height="2" fill="#5a5a14" stroke="#f2f21c" stroke-width="1"/>
<rect x="427.5" y="163.5" width="2" height="2" fill="#5a5a14" stroke="#f2f21c" stroke-width="1"/>
<rect x="483.5" y="176.5" width="2" height="2" fill="#5a5a14" stroke="#f2f21c" stroke-width="1"/>
<rect x="535.5" y="187.5" width="2" height="2" fill="#5a5a14" stroke="#f2f21c" stroke-width="1"/>
<rect x="545.5" y="152.5" width="2" height="2" fill="#5a5a14" stroke="#f2f21c" stroke-width="1"/>
<rect x="535.5" y="187.5" width="2" height="2" fill="#5a5a14" stroke="#f2f21c" stroke-width="1"/>
<rect x="361.5" y="90.5" width="2" height="2" fill="#5a5a14" stroke="#f2f21c" stroke-width="1"/>
<rect x="323.5" y="77.5" width="2" height="2" fill="#5a5a14" stroke="#f2f21c" stroke-width="1"/>
<rect x="260.5" y="55.5" width="2" height="2" fill="#5a5a14" stroke="#f2f21c" stroke-width="1"/>
<rect x="361.5" y="90.5" width="2" height="2" fill="#5a5a14" stroke="#f2f21c" stroke-width="1"/>
<rect x="439.5" y="134.5" width="2" height="2" fill="#5a5a14" stroke="#f2f21c" stroke-width="1"/>
<rect x="439.5" y="134.5" width="2" height="2" fill="#5a5a14" stroke="#f2f21c" stroke-width="1"/>
<rect x="474.5" y="146.5" width="2" height="2" fill="#5a5a14" stroke="#f2f21c" stroke-width="1"/>
<rect x="260.5" y="55.5" width="2" height="2" fill="#5a5a14" stroke="#f2f21c" stroke-width="1"/>
<rect x="323.5" y="77.5" width="2" height="2" fill="#5a5a14" stroke="#f2f21c" stroke-width="1"/>
<rect x="361.5" y="90.5" width="2" height="2" fill="#5a5a14" stroke="#f2f21c" stroke-width="1"/>
<rect x="428.5" y="125.5" width="2" height="2" fill="#5a5a14" stroke="#f2f21c" stroke-width="1"/>
<rect x="474.5" y="146.5" width="2" height="2" fill="#5a5a14" stroke="#f2f21c" stroke-width="1"/>
<rect x="508.5" y="149.5" width="2" height="2" fill="#5a5a14" stroke="#f2f21c" stroke-width="1"/>
<rect x="545.5" y="152.5" width="2" height="2" fill="#5a5a14" stroke="#f2f21c" stroke-width="1"/>
<rect x="657.5" y="126.5" width="2" height="2" fill="#5a5a14" stroke="#f2f21c" stroke-width="1"/>
<rect x="755.5" y="95.5" width="2" height="2" fill="#5a5a14" stroke="#f2f21c" stroke-width="1"/>
<rect x="829.5" y="94.5" width="2" height="2" fill="#5a5a14" stroke="#f2f21c" stroke-width="1"/>
<rect x="910.5" y="110.5" width="2" height="2" fill="#5a5a14" stroke="#f2f21c" stroke-width="1"/>
<rect x="964.5" y="134.5" width="2" height="2" fill="#5a5a14" stroke="#f2f21c" stroke-width="1"/>
<rect x="562.5" y="438.5" width="2" height="2" fill="#5a5a14" stroke="#f2f21c" stroke-width="1"/>
<rect x="549.5" y="566.5" width="2" height="2" fill="#5a5a14" stroke="#f2f21c" stroke-width="1"/>
<rect x="576.5" y="647.5" width="2" height="2" fill="#5a5a14" stroke="#f2f21c" stroke-width="1"/>
<rect x="619.5" y="699.5" width="2" height="2" fill="#5a5a14" stroke="#f2f21c" stroke-width="1"/>
<rect x="110.5" y="284.5" width="2" height="2" fill="#5a5a14" stroke="#f2f21c" stroke-width="1"/>
<rect x="129.5" y="284.5" width="2" height="2" fill="#5a5a14" stroke="#f2f21c" stroke-width="1"/>
<rect x="174.5" y="341.5" width="2" height="2" fill="#5a5a14" stroke="#f2f21c" stroke-width="1"/>
<rect x="200.5" y="382.5" width="2" height="2" fill="#5a5a14" stroke="#f2f21c" stroke-width="1"/>
<rect x="219.5" y="397.5" width="2" height="2" fill="#5a5a14" stroke="#f2f21c" stroke-width="1"/>
<rect x="249.5" y="401.5" width="2" height="2" fill="#5a5a14" stroke="#f2f21c" stroke-width="1"/>
<rect x="293.5" y="419.5" width="2" height="2" fill="#5a5a14" stroke="#f2f21c" stroke-width="1"/>
<rect x="402.5" y="423.5" width="2" height="2" fill="#5a5a14" stroke="#f2f21c" stroke-width="1"/>
<rect x="495.5" y="434.5" width="2" height="2" fill="#5a5a14" stroke="#f2f21c" stroke-width="1"/>
<rect x="562.5" y="438.5" width="2" height="2" fill="#5a5a14" stroke="#f2f21c" stroke-width="1"/>
<rect x="562.5" y="438.5" width="2" height="2" fill="#5a5a14" stroke="#f2f21c" stroke-width="1"/>
<rect x="562.5" y="360.5" width="2" height="2" fill="#5a5a14" stroke="#f2f21c" stroke-width="1"/>
<rect x="562.5" y="307.5" width="2" height="2" fill="#5a5a14" stroke="#f2f21c" stroke-width="1"/>
<rect x="562.5" y="262.5" width="2" height="2" fill="#5a5a14" stroke="#f2f21c" stroke-width="1"/>
<rect x="536.5" y="221.5" width="2" height="2" fill="#5a5a14" stroke="#f2f21c" stroke-width="1"/>
<rect x="545.5" y="152.5" width="2" height="2" fill="#5a5a14" stroke="#f2f21c" stroke-width="1"/>
<rect x="279.8" y="123.7" width="9" height="7" rx="1.5" fill="#2c3c9c" stroke="#7f8fd0" stroke-width=".8"/>
<text x="284.3" y="129.5" font-size="5.5" font-weight="bold" fill="#fff" text-anchor="middle">41</text>
<text x="292.0" y="134.6" font-size="7.7" fill="#fff" textLength="16.5" lengthAdjust="spacing">Eliza</text>
<rect x="400.7" y="60.2" width="9" height="7" rx="1.5" fill="#2c3c9c" stroke="#7f8fd0" stroke-width=".8"/>
<text x="405.2" y="66.0" font-size="5.5" font-weight="bold" fill="#fff" text-anchor="middle">41</text>
<text x="412.9" y="71.1" font-size="7.7" fill="#fff" textLength="27.4" lengthAdjust="spacing">Elizalde</text>
<rect x="536.3" y="66.5" width="9" height="7" rx="1.5" fill="#2c3c9c" stroke="#7f8fd0" stroke-width=".8"/>
<text x="540.8" y="72.3" font-size="5.5" font-weight="bold" fill="#fff" text-anchor="middle">41</text>
<text x="548.5" y="77.4" font-size="7.7" fill="#fff" textLength="53.1" lengthAdjust="spacing">Otsegi-bitarte</text>
<rect x="599.2" y="204.1" width="9" height="7" rx="1.5" fill="#2c3c9c" stroke="#7f8fd0" stroke-width=".8"/>
<text x="603.7" y="209.9" font-size="5.5" font-weight="bold" fill="#fff" text-anchor="middle">41</text>
<text x="611.4" y="215.0" font-size="7.7" fill="#fff" textLength="34.2" lengthAdjust="spacing">Lizarribar</text>
<rect x="321.5" y="222.1" width="9" height="7" rx="1.5" fill="#2c3c9c" stroke="#7f8fd0" stroke-width=".8"/>
<text x="326" y="227.9" font-size="5.5" font-weight="bold" fill="#fff" text-anchor="middle">41</text>
<text x="333.7" y="233.0" font-size="7.7" fill="#fff" textLength="40.2" lengthAdjust="spacing">Erretoretxe</text>
<rect x="466.4" y="254.10000000000002" width="9" height="7" rx="1.5" fill="#2c3c9c" stroke="#7f8fd0" stroke-width=".8"/>
<text x="470.9" y="259.90000000000003" font-size="5.5" font-weight="bold" fill="#fff" text-anchor="middle">41</text>
<text x="478.6" y="265.0" font-size="7.7" fill="#fff" textLength="43.5" lengthAdjust="spacing">Elordi Etxea</text>
<rect x="319.5" y="359.9" width="9" height="7" rx="1.5" fill="#2c3c9c" stroke="#7f8fd0" stroke-width=".8"/>
<text x="324" y="365.7" font-size="5.5" font-weight="bold" fill="#fff" text-anchor="middle">41</text>
<text x="331.7" y="370.8" font-size="7.7" fill="#fff" textLength="13.9" lengthAdjust="spacing">152</text>
<rect x="460.1" y="366.5" width="9" height="7" rx="1.5" fill="#2c3c9c" stroke="#7f8fd0" stroke-width=".8"/>
<text x="464.6" y="372.3" font-size="5.5" font-weight="bold" fill="#fff" text-anchor="middle">41</text>
<text x="472.3" y="377.4" font-size="7.7" fill="#fff" textLength="14.4" lengthAdjust="spacing">139</text>
<rect x="318.6" y="513.7" width="9" height="7" rx="1.5" fill="#2c3c9c" stroke="#7f8fd0" stroke-width=".8"/>
<text x="323.1" y="519.5" font-size="5.5" font-weight="bold" fill="#fff" text-anchor="middle">41</text>
<text x="330.8" y="524.6" font-size="7.7" fill="#fff" textLength="13.6" lengthAdjust="spacing">151</text>
<rect x="467.5" y="512.0" width="9" height="7" rx="1.5" fill="#2c3c9c" stroke="#7f8fd0" stroke-width=".8"/>
<text x="472" y="517.8" font-size="5.5" font-weight="bold" fill="#fff" text-anchor="middle">41</text>
<text x="479.7" y="522.9" font-size="7.7" fill="#fff" textLength="14.2" lengthAdjust="spacing">138</text>
<rect x="617.5" y="564.6" width="9" height="7" rx="1.5" fill="#2c3c9c" stroke="#7f8fd0" stroke-width=".8"/>
<text x="622" y="570.4" font-size="5.5" font-weight="bold" fill="#fff" text-anchor="middle">41</text>
<text x="629.7" y="575.5" font-size="7.7" fill="#fff" textLength="26.4" lengthAdjust="spacing">Aizpea</text>
<rect x="607.7" y="641.9" width="9" height="7" rx="1.5" fill="#2c3c9c" stroke="#7f8fd0" stroke-width=".8"/>
<text x="612.2" y="647.6999999999999" font-size="5.5" font-weight="bold" fill="#fff" text-anchor="middle">41</text>
<text x="619.9" y="652.8" font-size="7.7" fill="#fff" textLength="44.3" lengthAdjust="spacing">Aizpe-txiki</text>
<path d="M274.5 126.5h2v-2h2v2h2v2h-2v3h-2v-3h-2z" fill="#555" stroke="#ddd" stroke-width=".8"/><rect x="273.5" y="131.5" width="7" height="8" fill="#888" stroke="#ddd" stroke-width=".9"/>
<defs>
<linearGradient id="gtrk" x1="0" y1="0" x2="0" y2="1"><stop offset="0" stop-color="#ffffff"/><stop offset=".45" stop-color="#c8d8f0"/><stop offset="1" stop-color="#8ea4cc"/></linearGradient>
<linearGradient id="gthumb" x1="0" y1="0" x2="0" y2="1"><stop offset="0" stop-color="#ffffff"/><stop offset="1" stop-color="#c6ccd6"/></linearGradient>
</defs>
<rect x="134" y="70.500" width="25" height="5.500" fill="#1a1a1a" stroke="#8a8f96" stroke-width="1"/>
<rect x="60.500" y="70" width="76" height="6.500" fill="url(#gtrk)"/>
<path d="M134 66h13v7.500l-6.500 6.200l-6.500-6.200z" fill="url(#gthumb)" stroke="#dfe3ea" stroke-width=".6"/>
<path d="M60.500 94.500h99.500M60.500 89v10.500M159.800 89v10.500M109.800 89.500v9.800M84.800 92v5M134.700 92v5" stroke="#f6f6ea" stroke-width="1.200" fill="none"/>
<text x="59.500" y="111.500" font-size="11.300" fill="#f4f4f4">0</text>
<text x="129.800" y="111.500" font-size="11.300" fill="#f4f4f4">23 m</text>

</svg>
</div>
<div id="right" class="abs">
<svg width="46" height="631" viewBox="938 59 46 631" style="position:absolute;left:0;top:0" font-family="DejaVu Sans, Liberation Sans, sans-serif">
<defs><linearGradient id="gbtn" x1="0" y1="0" x2="0" y2="1"><stop offset="0" stop-color="#dbe5f1"/><stop offset=".35" stop-color="#ffffff"/><stop offset="1" stop-color="#b5cae3"/></linearGradient><linearGradient id="ghdr" x1="0" y1="0" x2="0" y2="1"><stop offset="0" stop-color="#ffffff"/><stop offset="1" stop-color="#ececec"/></linearGradient></defs>
<rect x="938" y="58" width="46" height="632" fill="#eeeeee"/>
<rect x="938" y="58" width="5.500" height="632" fill="#f1f1f1"/><rect x="938" y="58" width="1.200" height="632" fill="#fbfbfb"/>
<rect x="943" y="58" width="1" height="632" fill="#9e9e9e"/>
<rect x="944" y="58.5" width="40" height="1" fill="#fbfbfb"/>
<rect x="944" y="225.0" width="40" height="1" fill="#fbfbfb"/>
<rect x="944" y="440.8" width="40" height="1" fill="#fbfbfb"/>
<rect x="944" y="460.5" width="40" height="1" fill="#fbfbfb"/>
<rect x="944" y="480.3" width="40" height="1" fill="#fbfbfb"/>
<rect x="938" y="223.5" width="46" height="1.500" fill="#f6f6f6"/>
<rect x="938" y="439.5" width="46" height="1.500" fill="#f6f6f6"/>
<rect x="948" y="66.5" width="9.500" height="8.500" rx="1.800" fill="#fff" stroke="#0a0a0a" stroke-width="1.600"/><path d="M950.45 69.65h4.600l-2.300 2.800z" fill="#0a0a0a"/>
<g opacity=".55"><path d="M965.500 71.500h11l-2.500 4h-11.500z" fill="#fafafa" stroke="#9a9a9a" stroke-width=".7"/><path d="M965.500 67.800h11l-2.500 4h-11.500z" fill="#fafafa" stroke="#9a9a9a" stroke-width=".7"/><path d="M965.500 64h11l-2.500 4h-11.500z" fill="#e4e4e4" stroke="#9a9a9a" stroke-width=".7"/></g>
<rect x="945.500" y="81" width="40" height="103.500" fill="#eef0f2" stroke="#8b99ab" stroke-width="1"/>
<rect x="946" y="81.500" width="40" height="18" fill="#b8cfe5"/>
<g><circle cx="957.300" cy="88.800" r="4.200" fill="#d8ecc8" stroke="#3f8a2c" stroke-width="1.500"/><path d="M954 86l3.500-3.500" stroke="#6a7a5a" stroke-width="1.200"/><circle cx="952.800" cy="93.200" r="5" fill="#1f8f1f" stroke="#116a11" stroke-width=".8"/><path d="M950 93.200l2.200 2.400 3.800-4.600" stroke="#fff" stroke-width="1.700" fill="none" stroke-linecap="round" stroke-linejoin="round"/></g>
<text x="966.800" y="95.700" font-size="11.300" font-weight="bold" fill="#1d2a52">Data Layer 1</text>
<rect x="945" y="186.500" width="41" height="31" fill="#efefef" stroke="#a2a2a2" stroke-width="1"/><rect x="946" y="187.500" width="40" height="1" fill="#fbfbfb"/>
<path d="M972.300 192.800l9.500 9.700h-5.200v8.200h-8.200v-8.200h-5.400z" fill="#b9b9b9"/>
<rect x="948" y="232.5" width="9.500" height="8.500" rx="1.800" fill="#fff" stroke="#0a0a0a" stroke-width="1.600"/><path d="M950.45 235.65h4.600l-2.300 2.800z" fill="#0a0a0a"/>
<g opacity=".5"><path d="M963 228.800h8l3.500 3.500v9h-11.500z" fill="#ececec" stroke="#9c9c9c" stroke-width=".8"/><circle cx="968" cy="236" r="2.400" fill="#fff" stroke="#8a8a8a" stroke-width=".9"/><path d="M970 238l4 3.500" stroke="#8a8a8a" stroke-width="1.800"/></g>
<rect x="945.500" y="247.500" width="40" height="153.500" fill="#ffffff" stroke="#8b99ab" stroke-width="1"/>
<rect x="946" y="248" width="40" height="19.500" fill="url(#ghdr)"/>
<rect x="946" y="267.500" width="40" height="14" fill="#f3f3f3"/>
<text x="951.300" y="261.800" font-size="11.300" font-weight="bold" fill="#2a2630">Highway</text>
<rect x="946" y="281.500" width="40" height="15.500" fill="#b8cfe5"/><rect x="946" y="281" width="40" height="1" fill="#8e9fb4"/><rect x="946" y="296.500" width="40" height="1" fill="#8e9fb4"/>
<text x="946.800" y="293.800" font-size="11.300" fill="#20283c">highway</text>
<rect x="945.500" y="402.500" width="40" height="30.500" fill="url(#gbtn)" stroke="#8b99ab" stroke-width="1"/>
<rect x="979.500" y="415.800" width="6" height="3.600" fill="#a8a8a8" stroke="#8a8a8a" stroke-width=".6"/>
<rect x="948" y="448.8" width="9.500" height="8.500" rx="1.800" fill="#fff" stroke="#0a0a0a" stroke-width="1.600"/><path d="M951.65 450.75v4.600l2.800-2.300z" fill="#0a0a0a"/>
<g opacity=".6"><rect x="962" y="444.500" width="14.500" height="14" fill="#fafafa" stroke="#9a9a9a" stroke-width=".8"/><circle cx="967" cy="450" r="2.600" fill="none" stroke="#9a9a9a"/><circle cx="969.800" cy="451.500" r="2.800" fill="#f4f4f4" stroke="#9a9a9a"/><rect x="965.500" y="453" width="6" height="3.800" fill="#fafafa" stroke="#9a9a9a"/><path d="M973.800 447.500h2l-1-1.600zM973.800 455.500h2l-1 1.600z" fill="#333"/></g>
<rect x="948" y="468.8" width="9.500" height="8.500" rx="1.800" fill="#fff" stroke="#0a0a0a" stroke-width="1.600"/><path d="M951.65 470.75v4.600l2.800-2.300z" fill="#0a0a0a"/>
<g><path d="M963.500 466.500h11.500l1.500 2h-14.500z" fill="#dcdcdc" stroke="#b0b0b0" stroke-width=".5"/><rect x="963" y="473" width="13" height="2.600" fill="#f4f4f4" stroke="#b0b0b0" stroke-width=".5"/><rect x="962.500" y="475.800" width="14" height="2" fill="#e0e0e0" stroke="#b0b0b0" stroke-width=".5"/><path d="M961.500 468.800h3v-2.300l4.700 5-4.700 5v-2.300h-3z" fill="#3f76c4" stroke="#24518f" stroke-width=".6"/><path d="M977.800 468.800h-3v-2.300l-4.700 5 4.700 5v-2.300h3z" fill="#3f76c4" stroke="#24518f" stroke-width=".6"/></g>
<rect x="948" y="488.8" width="9.500" height="8.500" rx="1.800" fill="#fff" stroke="#0a0a0a" stroke-width="1.600"/><path d="M950.45 491.95h4.600l-2.300 2.800z" fill="#0a0a0a"/>
<g opacity=".6"><rect x="962" y="484.500" width="14.500" height="13.500" fill="#fafafa" stroke="#9a9a9a" stroke-width=".8"/><path d="M962.500 490c2-3 6-2 6 0 2-.5 4 1.500 3 3.500 1.500 1.500 1.500 3 .5 4.500h-9.500z" fill="#b4b4b4"/><circle cx="965.500" cy="495.500" r="1.800" fill="#fff"/><path d="M973.800 487.500h2l-1-1.600zM973.800 495h2l-1 1.600z" fill="#333"/></g>
<rect x="945.500" y="503.500" width="40" height="152" fill="#ffffff" stroke="#8b99ab" stroke-width="1"/>
<rect x="945.500" y="657.500" width="40" height="30.500" fill="url(#gbtn)" stroke="#8b99ab" stroke-width="1"/>
<rect x="944" y="688.500" width="40" height="1.500" fill="#d9d9d9"/>
<g><path d="M969 670l1.500-3.500 2-.5 1-3 2.500.5 1.500-2.500 2.500 1 2-1.500 2 1.500v20h-10l-2-2.500-3-1.500 1-3-1.500-2z" fill="#b8b8b8" stroke="#9a9a9a" stroke-width=".6" stroke-linejoin="round"/><circle cx="980.500" cy="671.500" r="2.800" fill="#f8f8f8"/><path d="M971.300 668.800h3.400v6.300h6.300v3.400h-6.300v6.300h-3.400v-6.300h-6.300v-3.400h6.300z" fill="#dedede" stroke="#5a5a5a" stroke-width=".9" stroke-linejoin="round"/></g>
</svg>
</div>
</body></html>
